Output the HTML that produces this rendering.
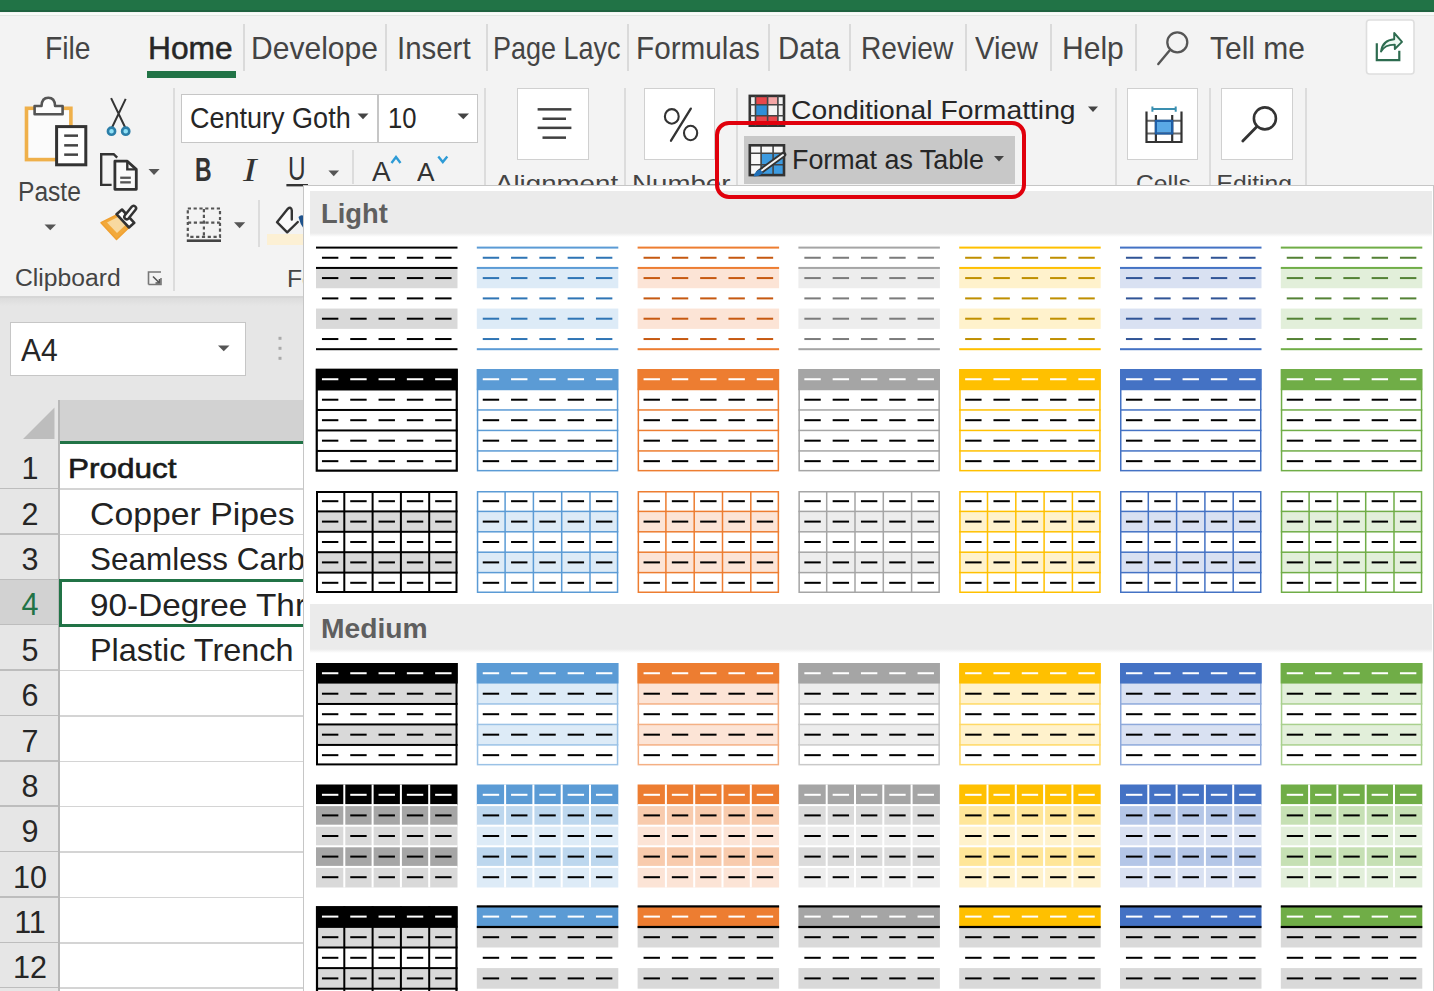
<!DOCTYPE html><html><head><meta charset="utf-8"><style>
html,body{margin:0;padding:0;}
body{width:1434px;height:991px;overflow:hidden;position:relative;background:#e6e6e6;font-family:"Liberation Sans",sans-serif;}
div{position:absolute;box-sizing:border-box;}
svg{position:absolute;}
</style></head><body>
<div style="left:0px;top:0px;width:1434px;height:12px;background:#217346;"></div>
<div style="left:0px;top:10px;width:1434px;height:2px;background:#1f6240;"></div>
<div style="left:0px;top:12px;width:1434px;height:284px;background:#f3f3f3;"></div>
<div style="left:0px;top:13px;width:1434px;height:2px;background:#f8fcf9;"></div>
<div style="left:0px;top:15px;width:1434px;height:1px;background:#e4e7e4;"></div>
<div style="left:45.00px;top:32.56px;font-size:30.52px;line-height:30.52px;color:#444444;white-space:pre;transform:scaleX(0.9273);transform-origin:0 0;">File</div>
<div style="left:148.00px;top:32.56px;font-size:30.52px;line-height:30.52px;color:#262626;white-space:pre;transform:scaleX(1.0401);transform-origin:0 0;-webkit-text-stroke:0.5px #262626;">Home</div>
<div style="left:147px;top:71px;width:89px;height:7px;background:#217346;"></div>
<div style="left:251.00px;top:32.56px;font-size:30.52px;line-height:30.52px;color:#444444;white-space:pre;transform:scaleX(0.9848);transform-origin:0 0;">Develope</div>
<div style="left:397.00px;top:32.56px;font-size:30.52px;line-height:30.52px;color:#444444;white-space:pre;transform:scaleX(0.9641);transform-origin:0 0;">Insert</div>
<div style="left:493.00px;top:32.56px;font-size:30.52px;line-height:30.52px;color:#444444;white-space:pre;transform:scaleX(0.8839);transform-origin:0 0;">Page Layc</div>
<div style="left:635.70px;top:32.56px;font-size:30.52px;line-height:30.52px;color:#444444;white-space:pre;transform:scaleX(0.9731);transform-origin:0 0;">Formulas</div>
<div style="left:777.60px;top:32.56px;font-size:30.52px;line-height:30.52px;color:#444444;white-space:pre;transform:scaleX(0.9629);transform-origin:0 0;">Data</div>
<div style="left:860.60px;top:32.56px;font-size:30.52px;line-height:30.52px;color:#444444;white-space:pre;transform:scaleX(0.9224);transform-origin:0 0;">Review</div>
<div style="left:975.00px;top:32.56px;font-size:30.52px;line-height:30.52px;color:#444444;white-space:pre;transform:scaleX(0.9591);transform-origin:0 0;">View</div>
<div style="left:1062.00px;top:32.56px;font-size:30.52px;line-height:30.52px;color:#444444;white-space:pre;transform:scaleX(0.9843);transform-origin:0 0;">Help</div>
<div style="left:1210.00px;top:32.56px;font-size:30.52px;line-height:30.52px;color:#444444;white-space:pre;transform:scaleX(0.9824);transform-origin:0 0;">Tell me</div>
<div style="left:243px;top:24px;width:2px;height:47px;background:#dadada;"></div>
<div style="left:385px;top:24px;width:2px;height:47px;background:#dadada;"></div>
<div style="left:486px;top:24px;width:2px;height:47px;background:#dadada;"></div>
<div style="left:627px;top:24px;width:2px;height:47px;background:#dadada;"></div>
<div style="left:768px;top:24px;width:2px;height:47px;background:#dadada;"></div>
<div style="left:849px;top:24px;width:2px;height:47px;background:#dadada;"></div>
<div style="left:965px;top:24px;width:2px;height:47px;background:#dadada;"></div>
<div style="left:1050px;top:24px;width:2px;height:47px;background:#dadada;"></div>
<div style="left:1135px;top:24px;width:2px;height:47px;background:#dadada;"></div>
<div style="left:173px;top:88px;width:2px;height:203px;background:#dcdcdc;"></div>
<div style="left:484px;top:88px;width:2px;height:203px;background:#dcdcdc;"></div>
<div style="left:624px;top:88px;width:2px;height:203px;background:#dcdcdc;"></div>
<div style="left:735.5px;top:88px;width:2px;height:203px;background:#dcdcdc;"></div>
<div style="left:1115px;top:88px;width:2px;height:203px;background:#dcdcdc;"></div>
<div style="left:1208.5px;top:88px;width:2px;height:203px;background:#dcdcdc;"></div>
<div style="left:1305px;top:88px;width:2px;height:203px;background:#dcdcdc;"></div>
<div style="left:18.40px;top:177.01px;font-size:28.34px;line-height:28.34px;color:#444;white-space:pre;transform:scaleX(0.8679);transform-origin:0 0;">Paste</div>
<div style="left:14.70px;top:265.93px;font-size:24.42px;line-height:24.42px;color:#444;white-space:pre;transform:scaleX(1.0114);transform-origin:0 0;">Clipboard</div>
<div style="left:287.00px;top:266.58px;font-size:24.71px;line-height:24.71px;color:#444;white-space:pre;">Fo</div>
<div style="left:181px;top:94px;width:297px;height:49px;background:#ffffff;border:1.5px solid #c6c6c6;"></div>
<div style="left:377px;top:95px;width:1.5px;height:47px;background:#c6c6c6;"></div>
<div style="left:190.00px;top:104.46px;font-size:28.63px;line-height:28.63px;color:#262626;white-space:pre;transform:scaleX(0.9437);transform-origin:0 0;">Century Goth</div>
<div style="left:387.50px;top:104.46px;font-size:28.63px;line-height:28.63px;color:#262626;white-space:pre;transform:scaleX(0.8951);transform-origin:0 0;">10</div>
<div style="left:194.60px;top:153.54px;font-size:32.56px;line-height:32.56px;color:#333;white-space:pre;font-weight:bold;transform:scaleX(0.7062);transform-origin:0 0;">B</div>
<div style="left:243px;top:152.5px;font-family:&quot;Liberation Serif&quot;,serif;font-style:italic;font-size:34px;line-height:34px;transform:scaleX(1.2);transform-origin:0 0;color:#333;">I</div>
<div style="left:288.40px;top:153.49px;font-size:32.85px;line-height:32.85px;color:#333;white-space:pre;transform:scaleX(0.7421);transform-origin:0 0;">U</div>
<div style="left:372.30px;top:157.11px;font-size:28.34px;line-height:28.34px;color:#333;white-space:pre;transform:scaleX(0.9839);transform-origin:0 0;">A</div>
<div style="left:417.30px;top:159.57px;font-size:25.44px;line-height:25.44px;color:#333;white-space:pre;transform:scaleX(1.0315);transform-origin:0 0;">A</div>
<div style="left:352px;top:150px;width:2px;height:34px;background:#dcdcdc;"></div>
<div style="left:258px;top:200px;width:2px;height:47px;background:#dcdcdc;"></div>
<div style="left:517px;top:88px;width:72px;height:72px;background:#ffffff;border:1.5px solid #d0d0d0;"></div>
<div style="left:644px;top:88px;width:71px;height:72px;background:#ffffff;border:1.5px solid #d0d0d0;"></div>
<div style="left:1127px;top:88px;width:71px;height:72px;background:#ffffff;border:1.5px solid #d0d0d0;"></div>
<div style="left:1221px;top:88px;width:72px;height:72px;background:#ffffff;border:1.5px solid #d0d0d0;"></div>
<div style="left:494.60px;top:171.58px;font-size:24.71px;line-height:24.71px;color:#444;white-space:pre;transform:scaleX(1.1203);transform-origin:0 0;">Alignment</div>
<div style="left:631.70px;top:171.58px;font-size:24.71px;line-height:24.71px;color:#444;white-space:pre;transform:scaleX(1.1203);transform-origin:0 0;">Number</div>
<div style="left:1136.00px;top:171.58px;font-size:24.71px;line-height:24.71px;color:#444;white-space:pre;">Cells</div>
<div style="left:1216.50px;top:171.58px;font-size:24.71px;line-height:24.71px;color:#444;white-space:pre;">Editing</div>
<div style="left:791.40px;top:97.97px;font-size:25.44px;line-height:25.44px;color:#262626;white-space:pre;transform:scaleX(1.1121);transform-origin:0 0;">Conditional Formatting</div>
<div style="left:744px;top:135.6px;width:271px;height:48.4px;background:#c8c8c8;"></div>
<div style="left:792.00px;top:145.92px;font-size:27.62px;line-height:27.62px;color:#262626;white-space:pre;transform:scaleX(0.9722);transform-origin:0 0;">Format as Table</div>
<div style="left:0px;top:296px;width:1434px;height:2px;background:#d6d6d6;"></div>
<div style="left:0px;top:298px;width:1434px;height:8px;background:linear-gradient(#dcdcdc,#e6e6e6);"></div>
<svg style="left:0;top:0" width="1434" height="991" viewBox="0 0 1434 991"><rect x="26.5" y="108.3" width="44.4" height="51.3" fill="#fbfbfb" stroke="#efb04a" stroke-width="3.6"/><path d="M34.6 114.2 V106 H41.5 Q41.8 97.8 48.3 97.8 Q54.8 97.8 55.1 106 H62.6 V114.2 Z" fill="#fdfdfd" stroke="#555" stroke-width="2.6" stroke-linejoin="round"/><rect x="56.6" y="126.6" width="29.2" height="38.2" fill="#fff" stroke="#333" stroke-width="3"/><rect x="64.2" y="134.4" width="13.8" height="2.5" fill="#444"/><rect x="64.2" y="144.10000000000002" width="13.8" height="2.5" fill="#444"/><rect x="64.2" y="153.4" width="13.8" height="2.5" fill="#444"/><path d="M44.5 224.5 H56 L50.25 230.3 Z" fill="#555"/><path d="M111.1 98.1 L125.2 127.5 M125.7 98.9 L112 127.5" stroke="#333" stroke-width="2" fill="none"/><circle cx="111.5" cy="131.2" r="3.6" fill="#8fe0f6" stroke="#2b7ea8" stroke-width="2.6"/><circle cx="125.7" cy="131.2" r="3.6" fill="#8fe0f6" stroke="#2b7ea8" stroke-width="2.6"/><path d="M111.6 184.9 H101.2 V154.2 H113.7 L117.2 157.6" fill="none" stroke="#333" stroke-width="2.4"/><path d="M114.9 161.2 H127.3 L136.3 169.4 V189.3 H114.9 Z" fill="#fafafa" stroke="#333" stroke-width="2.8" stroke-linejoin="round"/><path d="M127.3 161.2 V169.4 H136.3" fill="none" stroke="#333" stroke-width="2.4"/><rect x="120.2" y="176.6" width="10.6" height="2.3" fill="#555"/><rect x="120.2" y="181.2" width="10.6" height="2.3" fill="#555"/><path d="M148.5 169 H159.6 L154 175 Z" fill="#555"/><path d="M101 222.7 L117.5 214.5 L129.5 227 L116.5 239.5 Z" fill="#f2a93b" stroke="#f0a030" stroke-width="1.5" stroke-linejoin="round"/><path d="M107 222.5 L118 217 L125.5 225 L117 233 Z" fill="#f8d9a0"/><path d="M116.5 214.2 L122 209.5 L134.3 222.8 L129 227.5 Z" fill="#fff" stroke="#333" stroke-width="2.6" stroke-linejoin="round"/><path d="M126.8 216.8 L133.6 208.3" stroke="#333" stroke-width="7.4" stroke-linecap="round"/><path d="M126.8 216.8 L133.6 208.3" stroke="#fafafa" stroke-width="2.4" stroke-linecap="round"/><path d="M148.5 284.5 V272 H161 M148.5 284.5 H161 V278" fill="none" stroke="#777" stroke-width="1.6"/><path d="M153 276.5 L159.5 283 M159.5 279 V283 H155.5" fill="none" stroke="#555" stroke-width="1.6"/><path d="M357.5 113.5 H368.5 L363 119.3 Z" fill="#444"/><path d="M457.5 113.5 H469 L463.3 119.3 Z" fill="#444"/><path d="M328.4 170.4 H339.1 L333.75 176.2 Z" fill="#555"/><path d="M234 222.3 H245.2 L239.6 228.2 Z" fill="#555"/><path d="M391.5 163 L396 157 L400.5 163" fill="none" stroke="#2e9bd6" stroke-width="2.4"/><path d="M438.3 156.5 L442.8 162 L447.3 156.5" fill="none" stroke="#2e9bd6" stroke-width="2.4"/><rect x="286.4" y="184" width="21.6" height="2.4" fill="#333"/><rect x="187.8" y="208.5" width="32.2" height="28.3" fill="none" stroke="#555" stroke-width="2.2" stroke-dasharray="3.2 2.6"/><path d="M203.9 209 V236.5 M188 222.6 H219.8" fill="none" stroke="#555" stroke-width="2.2" stroke-dasharray="3.2 2.6"/><rect x="186.8" y="239.4" width="34.2" height="2.6" fill="#444"/><rect x="267" y="234" width="37" height="11" fill="#fcf0d4"/><path d="M291.8 219.5 V210.5 Q291.2 206 287.6 209 L277 222.2 L287.2 232.3 L297.8 222" fill="#fbfbfb" stroke="#333" stroke-width="2.4" stroke-linejoin="round" stroke-linecap="round"/><path d="M298.5 217 Q301 214 304 216 L304 229 Q300 224 298.5 217 Z" fill="#1f528c"/><ellipse cx="671.8" cy="116.4" rx="6.9" ry="7.3" fill="none" stroke="#333" stroke-width="2.1"/><ellipse cx="690.6" cy="133" rx="6.6" ry="7.3" fill="none" stroke="#333" stroke-width="2.1"/><path d="M690.8 108.6 L671 140.7" stroke="#333" stroke-width="2.3" stroke-linecap="round"/><rect x="537.6" y="108.1" width="33.799999999999955" height="2.5" fill="#404040"/><rect x="542.5" y="117.5" width="23.5" height="2.5" fill="#404040"/><rect x="537.6" y="126.6" width="33.799999999999955" height="2.5" fill="#404040"/><rect x="542.5" y="136.4" width="23.5" height="2.5" fill="#404040"/><rect x="756" y="96" width="11.5" height="9" fill="#e8474b"/><rect x="767.5" y="96" width="10.5" height="9" fill="#f4a6a6"/><rect x="756" y="105" width="11.5" height="11" fill="#2f8fd8"/><rect x="756" y="116" width="22" height="10" fill="#e8474b"/><rect x="749.8" y="95.9" width="34.2" height="29.8" fill="none" stroke="#333" stroke-width="2.6"/><path d="M755.5 96 V126 M767.6 96 V126 M777.9 96 V126 M749.8 104.8 H784 M749.8 115.8 H784" stroke="#444" stroke-width="1.6"/><path d="M1088 106.5 H1098 L1093 112 Z" fill="#444"/><rect x="750" y="145.3" width="34" height="29.8" fill="#f8f8f8"/><rect x="761" y="153.2" width="23" height="22" fill="#3d9be0"/><path d="M761.1 145.3 V175 M773.1 145.3 V175 M750 153.2 H784 M750 164.7 H784" stroke="#444" stroke-width="1.6"/><rect x="749.8" y="145.3" width="34.2" height="29.8" fill="none" stroke="#333" stroke-width="2.6"/><path d="M759 172.5 L783.5 154.5" stroke="#333" stroke-width="5.6" stroke-linecap="round"/><path d="M760 171.8 L783 155" stroke="#f4f4f4" stroke-width="2" stroke-linecap="round"/><path d="M753.5 176.5 Q755 170.5 760.5 169.5 L763 173 Q759 176.5 753.5 176.5 Z" fill="#1f6fb8"/><path d="M994 156 H1004 L999 161.5 Z" fill="#444"/><rect x="1156" y="120.7" width="16.4" height="12.8" fill="#5aa9e6"/><path d="M1146.5 120.8 H1181.5 M1146.5 133.5 H1181.5" fill="none" stroke="#6b6b6b" stroke-width="2"/><path d="M1146.5 111.5 V142 H1181.5 V111.5 M1155.9 115 V142 M1172.2 115 V142" fill="none" stroke="#333" stroke-width="2.2"/><path d="M1155.9 120 V134.5 M1172.2 120 V134.5 M1155.9 120.8 H1172.2 M1155.9 133.5 H1172.2" fill="none" stroke="#1f5fa8" stroke-width="2.2"/><path d="M1152.4 109.1 H1175.7 M1152.4 106.5 V111.7 M1175.7 106.5 V111.7" fill="none" stroke="#3a8fb0" stroke-width="2"/><circle cx="1264.9" cy="118.4" r="11" fill="none" stroke="#333" stroke-width="2.6"/><path d="M1257 126.6 L1242.8 141" stroke="#333" stroke-width="2.8" stroke-linecap="round"/><circle cx="1177.3" cy="42.3" r="10" fill="none" stroke="#555" stroke-width="2.3"/><path d="M1170 50 L1158.3 64" stroke="#555" stroke-width="2.4" stroke-linecap="round"/><rect x="1366.5" y="20" width="47.5" height="54" rx="3" fill="#ffffff" stroke="#dedede" stroke-width="1.6"/><path d="M1376.8 43.2 V60.2 H1399.3 V50.7" fill="none" stroke="#2d6b4f" stroke-width="2.2"/><path d="M1381 51.5 Q1382.5 40 1394.2 39.2 V33 L1402 41.8 L1394.8 49 V44.6 Q1385 44.5 1381 51.5 Z" fill="#eefaf3" stroke="#2d6b4f" stroke-width="1.9" stroke-linejoin="round"/></svg>
<div style="left:10px;top:322px;width:236px;height:54px;background:#ffffff;border:1.5px solid #c6c6c6;"></div>
<div style="left:20.50px;top:334.56px;font-size:30.52px;line-height:30.52px;color:#262626;white-space:pre;transform:scaleX(0.9858);transform-origin:0 0;">A4</div>
<div style="left:0px;top:400px;width:1434px;height:44px;background:#e6e6e6;"></div>
<div style="left:59px;top:400px;width:1400px;height:41px;background:#d2d2d2;"></div>
<div style="left:59px;top:441px;width:1400px;height:3px;background:#217346;"></div>
<div style="left:0px;top:444.0px;width:59px;height:45.37px;background:#e6e6e6;"></div>
<div style="left:0px;top:487.87px;width:59px;height:1.5px;background:#bdbdbd;"></div>
<div style="left:0px;top:489.37px;width:59px;height:45.37px;background:#e6e6e6;"></div>
<div style="left:0px;top:533.24px;width:59px;height:1.5px;background:#bdbdbd;"></div>
<div style="left:0px;top:534.74px;width:59px;height:45.37px;background:#e6e6e6;"></div>
<div style="left:0px;top:578.61px;width:59px;height:1.5px;background:#bdbdbd;"></div>
<div style="left:0px;top:580.11px;width:59px;height:45.37px;background:#d2d2d2;"></div>
<div style="left:0px;top:623.98px;width:59px;height:1.5px;background:#bdbdbd;"></div>
<div style="left:0px;top:625.48px;width:59px;height:45.37px;background:#e6e6e6;"></div>
<div style="left:0px;top:669.35px;width:59px;height:1.5px;background:#bdbdbd;"></div>
<div style="left:0px;top:670.85px;width:59px;height:45.37px;background:#e6e6e6;"></div>
<div style="left:0px;top:714.72px;width:59px;height:1.5px;background:#bdbdbd;"></div>
<div style="left:0px;top:716.22px;width:59px;height:45.37px;background:#e6e6e6;"></div>
<div style="left:0px;top:760.09px;width:59px;height:1.5px;background:#bdbdbd;"></div>
<div style="left:0px;top:761.5899999999999px;width:59px;height:45.37px;background:#e6e6e6;"></div>
<div style="left:0px;top:805.4599999999999px;width:59px;height:1.5px;background:#bdbdbd;"></div>
<div style="left:0px;top:806.96px;width:59px;height:45.37px;background:#e6e6e6;"></div>
<div style="left:0px;top:850.83px;width:59px;height:1.5px;background:#bdbdbd;"></div>
<div style="left:0px;top:852.3299999999999px;width:59px;height:45.37px;background:#e6e6e6;"></div>
<div style="left:0px;top:896.1999999999999px;width:59px;height:1.5px;background:#bdbdbd;"></div>
<div style="left:0px;top:897.7px;width:59px;height:45.37px;background:#e6e6e6;"></div>
<div style="left:0px;top:941.57px;width:59px;height:1.5px;background:#bdbdbd;"></div>
<div style="left:0px;top:943.0699999999999px;width:59px;height:45.37px;background:#e6e6e6;"></div>
<div style="left:0px;top:986.9399999999999px;width:59px;height:1.5px;background:#bdbdbd;"></div>
<div style="left:59px;top:444px;width:1400px;height:547px;background:#ffffff;"></div>
<div style="left:59px;top:488.37px;width:1400px;height:1.5px;background:#d4d4d4;"></div>
<div style="left:59px;top:533.74px;width:1400px;height:1.5px;background:#d4d4d4;"></div>
<div style="left:59px;top:579.11px;width:1400px;height:1.5px;background:#d4d4d4;"></div>
<div style="left:59px;top:624.48px;width:1400px;height:1.5px;background:#d4d4d4;"></div>
<div style="left:59px;top:669.85px;width:1400px;height:1.5px;background:#d4d4d4;"></div>
<div style="left:59px;top:715.22px;width:1400px;height:1.5px;background:#d4d4d4;"></div>
<div style="left:59px;top:760.5899999999999px;width:1400px;height:1.5px;background:#d4d4d4;"></div>
<div style="left:59px;top:805.96px;width:1400px;height:1.5px;background:#d4d4d4;"></div>
<div style="left:59px;top:851.3299999999999px;width:1400px;height:1.5px;background:#d4d4d4;"></div>
<div style="left:59px;top:896.7px;width:1400px;height:1.5px;background:#d4d4d4;"></div>
<div style="left:59px;top:942.0699999999999px;width:1400px;height:1.5px;background:#d4d4d4;"></div>
<div style="left:59px;top:987.4399999999999px;width:1400px;height:1.5px;background:#d4d4d4;"></div>
<div style="left:58px;top:400px;width:1.8px;height:591px;background:#b8b8b8;"></div>
<svg style="left:0;top:0" width="1434" height="991" viewBox="0 0 1434 991"><path d="M218 345.5 H229.5 L223.75 351.3 Z" fill="#555"/><rect x="278.5" y="336.8" width="3" height="3" fill="#aaa"/><rect x="278.5" y="346.8" width="3" height="3" fill="#aaa"/><rect x="278.5" y="356.8" width="3" height="3" fill="#aaa"/><path d="M54.5 407.5 V439 H23 Z" fill="#bdbdbd"/></svg>
<div style="left:67.80px;top:456.31px;font-size:27.03px;line-height:27.03px;color:#1a1a1a;white-space:pre;transform:scaleX(1.1646);transform-origin:0 0;-webkit-text-stroke:0.6px #1a1a1a;">Product</div>
<div style="left:89.60px;top:498.96px;font-size:30.52px;line-height:30.52px;color:#222;white-space:pre;transform:scaleX(1.1068);transform-origin:0 0;">Copper Pipes</div>
<div style="left:89.60px;top:544.33px;font-size:30.52px;line-height:30.52px;color:#222;white-space:pre;transform:scaleX(1.0304);transform-origin:0 0;">Seamless Carbon</div>
<div style="left:89.60px;top:589.70px;font-size:30.52px;line-height:30.52px;color:#222;white-space:pre;transform:scaleX(1.0914);transform-origin:0 0;">90-Degree Threaded</div>
<div style="left:89.60px;top:635.07px;font-size:30.52px;line-height:30.52px;color:#222;white-space:pre;transform:scaleX(1.0616);transform-origin:0 0;">Plastic Trench</div>
<div style="left:59px;top:579px;width:400px;height:48px;background:transparent;border:3px solid #217346;"></div>
<div style="left:21.51px;top:453.36px;font-size:30.52px;line-height:30.52px;color:#262626;white-space:pre;">1</div>
<div style="left:21.51px;top:498.73px;font-size:30.52px;line-height:30.52px;color:#262626;white-space:pre;">2</div>
<div style="left:21.51px;top:544.10px;font-size:30.52px;line-height:30.52px;color:#262626;white-space:pre;">3</div>
<div style="left:21.51px;top:589.47px;font-size:30.52px;line-height:30.52px;color:#217346;white-space:pre;">4</div>
<div style="left:21.51px;top:634.84px;font-size:30.52px;line-height:30.52px;color:#262626;white-space:pre;">5</div>
<div style="left:21.51px;top:680.21px;font-size:30.52px;line-height:30.52px;color:#262626;white-space:pre;">6</div>
<div style="left:21.51px;top:725.58px;font-size:30.52px;line-height:30.52px;color:#262626;white-space:pre;">7</div>
<div style="left:21.51px;top:770.95px;font-size:30.52px;line-height:30.52px;color:#262626;white-space:pre;">8</div>
<div style="left:21.51px;top:816.32px;font-size:30.52px;line-height:30.52px;color:#262626;white-space:pre;">9</div>
<div style="left:13.03px;top:861.69px;font-size:30.52px;line-height:30.52px;color:#262626;white-space:pre;">10</div>
<div style="left:14.16px;top:907.06px;font-size:30.52px;line-height:30.52px;color:#262626;white-space:pre;">11</div>
<div style="left:13.03px;top:952.43px;font-size:30.52px;line-height:30.52px;color:#262626;white-space:pre;">12</div>
<div style="left:303px;top:184.5px;width:1131px;height:807px;background:#ffffff;border:1.5px solid #c6c6c6;"></div>
<div style="left:310px;top:190.5px;width:1122px;height:42.5px;background:#ebebeb;"></div>
<div style="left:310px;top:233px;width:1122px;height:4px;background:linear-gradient(#ebebeb,#ffffff);"></div>
<div style="left:310px;top:604px;width:1122px;height:45px;background:#ebebeb;"></div>
<div style="left:310px;top:649px;width:1122px;height:4px;background:linear-gradient(#ebebeb,#ffffff);"></div>
<div style="left:320.70px;top:199.01px;font-size:28.34px;line-height:28.34px;color:#5f5f5f;white-space:pre;font-weight:bold;transform:scaleX(0.9647);transform-origin:0 0;">Light</div>
<div style="left:321.30px;top:615.22px;font-size:27.62px;line-height:27.62px;color:#5f5f5f;white-space:pre;font-weight:bold;transform:scaleX(1.0227);transform-origin:0 0;">Medium</div>
<svg style="left:0;top:0" width="1434" height="991" viewBox="0 0 1434 991"><rect x="316.00" y="267.92" width="141.50" height="20.32" fill="#d9d9d9"/><rect x="316.00" y="308.56" width="141.50" height="20.32" fill="#d9d9d9"/><rect x="316.00" y="246.60" width="141.50" height="2.00" fill="#000000"/><rect x="316.00" y="266.92" width="141.50" height="2.00" fill="#000000"/><rect x="316.00" y="348.20" width="141.50" height="2.00" fill="#000000"/><rect x="321.95" y="256.76" width="16.40" height="2.00" fill="#000"/><rect x="350.25" y="256.76" width="16.40" height="2.00" fill="#000"/><rect x="378.55" y="256.76" width="16.40" height="2.00" fill="#000"/><rect x="406.85" y="256.76" width="16.40" height="2.00" fill="#000"/><rect x="435.15" y="256.76" width="16.40" height="2.00" fill="#000"/><rect x="321.95" y="277.08" width="16.40" height="2.00" fill="#000"/><rect x="350.25" y="277.08" width="16.40" height="2.00" fill="#000"/><rect x="378.55" y="277.08" width="16.40" height="2.00" fill="#000"/><rect x="406.85" y="277.08" width="16.40" height="2.00" fill="#000"/><rect x="435.15" y="277.08" width="16.40" height="2.00" fill="#000"/><rect x="321.95" y="297.40" width="16.40" height="2.00" fill="#000"/><rect x="350.25" y="297.40" width="16.40" height="2.00" fill="#000"/><rect x="378.55" y="297.40" width="16.40" height="2.00" fill="#000"/><rect x="406.85" y="297.40" width="16.40" height="2.00" fill="#000"/><rect x="435.15" y="297.40" width="16.40" height="2.00" fill="#000"/><rect x="321.95" y="317.72" width="16.40" height="2.00" fill="#000"/><rect x="350.25" y="317.72" width="16.40" height="2.00" fill="#000"/><rect x="378.55" y="317.72" width="16.40" height="2.00" fill="#000"/><rect x="406.85" y="317.72" width="16.40" height="2.00" fill="#000"/><rect x="435.15" y="317.72" width="16.40" height="2.00" fill="#000"/><rect x="321.95" y="338.04" width="16.40" height="2.00" fill="#000"/><rect x="350.25" y="338.04" width="16.40" height="2.00" fill="#000"/><rect x="378.55" y="338.04" width="16.40" height="2.00" fill="#000"/><rect x="406.85" y="338.04" width="16.40" height="2.00" fill="#000"/><rect x="435.15" y="338.04" width="16.40" height="2.00" fill="#000"/><rect x="316.00" y="369.00" width="141.50" height="20.48" fill="#000000"/><rect x="316.00" y="388.48" width="141.50" height="2.00" fill="#000000"/><rect x="316.00" y="408.96" width="141.50" height="2.00" fill="#000000"/><rect x="316.00" y="429.44" width="141.50" height="2.00" fill="#000000"/><rect x="316.00" y="449.92" width="141.50" height="2.00" fill="#000000"/><rect x="316.75" y="369.75" width="140.00" height="100.90" fill="none" stroke="#000000" stroke-width="2.2"/><rect x="321.95" y="378.24" width="16.40" height="2.00" fill="#ffffff"/><rect x="350.25" y="378.24" width="16.40" height="2.00" fill="#ffffff"/><rect x="378.55" y="378.24" width="16.40" height="2.00" fill="#ffffff"/><rect x="406.85" y="378.24" width="16.40" height="2.00" fill="#ffffff"/><rect x="435.15" y="378.24" width="16.40" height="2.00" fill="#ffffff"/><rect x="321.95" y="398.72" width="16.40" height="2.00" fill="#000"/><rect x="350.25" y="398.72" width="16.40" height="2.00" fill="#000"/><rect x="378.55" y="398.72" width="16.40" height="2.00" fill="#000"/><rect x="406.85" y="398.72" width="16.40" height="2.00" fill="#000"/><rect x="435.15" y="398.72" width="16.40" height="2.00" fill="#000"/><rect x="321.95" y="419.20" width="16.40" height="2.00" fill="#000"/><rect x="350.25" y="419.20" width="16.40" height="2.00" fill="#000"/><rect x="378.55" y="419.20" width="16.40" height="2.00" fill="#000"/><rect x="406.85" y="419.20" width="16.40" height="2.00" fill="#000"/><rect x="435.15" y="419.20" width="16.40" height="2.00" fill="#000"/><rect x="321.95" y="439.68" width="16.40" height="2.00" fill="#000"/><rect x="350.25" y="439.68" width="16.40" height="2.00" fill="#000"/><rect x="378.55" y="439.68" width="16.40" height="2.00" fill="#000"/><rect x="406.85" y="439.68" width="16.40" height="2.00" fill="#000"/><rect x="435.15" y="439.68" width="16.40" height="2.00" fill="#000"/><rect x="321.95" y="460.16" width="16.40" height="2.00" fill="#000"/><rect x="350.25" y="460.16" width="16.40" height="2.00" fill="#000"/><rect x="378.55" y="460.16" width="16.40" height="2.00" fill="#000"/><rect x="406.85" y="460.16" width="16.40" height="2.00" fill="#000"/><rect x="435.15" y="460.16" width="16.40" height="2.00" fill="#000"/><rect x="316.00" y="511.40" width="141.50" height="20.40" fill="#d9d9d9"/><rect x="316.00" y="552.20" width="141.50" height="20.40" fill="#d9d9d9"/><rect x="316.00" y="510.40" width="141.50" height="2.00" fill="#000000"/><rect x="316.00" y="530.80" width="141.50" height="2.00" fill="#000000"/><rect x="316.00" y="551.20" width="141.50" height="2.00" fill="#000000"/><rect x="316.00" y="571.60" width="141.50" height="2.00" fill="#000000"/><rect x="343.30" y="491.00" width="2.00" height="102.00" fill="#000000"/><rect x="371.60" y="491.00" width="2.00" height="102.00" fill="#000000"/><rect x="399.90" y="491.00" width="2.00" height="102.00" fill="#000000"/><rect x="428.20" y="491.00" width="2.00" height="102.00" fill="#000000"/><rect x="317.00" y="492.00" width="139.50" height="100.00" fill="none" stroke="#000000" stroke-width="2"/><rect x="321.95" y="500.20" width="16.40" height="2.00" fill="#000"/><rect x="350.25" y="500.20" width="16.40" height="2.00" fill="#000"/><rect x="378.55" y="500.20" width="16.40" height="2.00" fill="#000"/><rect x="406.85" y="500.20" width="16.40" height="2.00" fill="#000"/><rect x="435.15" y="500.20" width="16.40" height="2.00" fill="#000"/><rect x="321.95" y="520.60" width="16.40" height="2.00" fill="#000"/><rect x="350.25" y="520.60" width="16.40" height="2.00" fill="#000"/><rect x="378.55" y="520.60" width="16.40" height="2.00" fill="#000"/><rect x="406.85" y="520.60" width="16.40" height="2.00" fill="#000"/><rect x="435.15" y="520.60" width="16.40" height="2.00" fill="#000"/><rect x="321.95" y="541.00" width="16.40" height="2.00" fill="#000"/><rect x="350.25" y="541.00" width="16.40" height="2.00" fill="#000"/><rect x="378.55" y="541.00" width="16.40" height="2.00" fill="#000"/><rect x="406.85" y="541.00" width="16.40" height="2.00" fill="#000"/><rect x="435.15" y="541.00" width="16.40" height="2.00" fill="#000"/><rect x="321.95" y="561.40" width="16.40" height="2.00" fill="#000"/><rect x="350.25" y="561.40" width="16.40" height="2.00" fill="#000"/><rect x="378.55" y="561.40" width="16.40" height="2.00" fill="#000"/><rect x="406.85" y="561.40" width="16.40" height="2.00" fill="#000"/><rect x="435.15" y="561.40" width="16.40" height="2.00" fill="#000"/><rect x="321.95" y="581.80" width="16.40" height="2.00" fill="#000"/><rect x="350.25" y="581.80" width="16.40" height="2.00" fill="#000"/><rect x="378.55" y="581.80" width="16.40" height="2.00" fill="#000"/><rect x="406.85" y="581.80" width="16.40" height="2.00" fill="#000"/><rect x="435.15" y="581.80" width="16.40" height="2.00" fill="#000"/><rect x="316.00" y="663.00" width="141.50" height="20.48" fill="#000000"/><rect x="316.00" y="683.48" width="141.50" height="20.48" fill="#d9d9d9"/><rect x="316.00" y="724.44" width="141.50" height="20.48" fill="#d9d9d9"/><rect x="316.00" y="702.96" width="141.50" height="2.00" fill="#000"/><rect x="316.00" y="723.44" width="141.50" height="2.00" fill="#000"/><rect x="316.00" y="743.92" width="141.50" height="2.00" fill="#000"/><rect x="317.00" y="664.00" width="139.50" height="100.40" fill="none" stroke="#000" stroke-width="2"/><rect x="316.00" y="663.00" width="141.50" height="20.48" fill="#000000"/><rect x="321.95" y="672.24" width="16.40" height="2.00" fill="#ffffff"/><rect x="350.25" y="672.24" width="16.40" height="2.00" fill="#ffffff"/><rect x="378.55" y="672.24" width="16.40" height="2.00" fill="#ffffff"/><rect x="406.85" y="672.24" width="16.40" height="2.00" fill="#ffffff"/><rect x="435.15" y="672.24" width="16.40" height="2.00" fill="#ffffff"/><rect x="321.95" y="692.72" width="16.40" height="2.00" fill="#000"/><rect x="350.25" y="692.72" width="16.40" height="2.00" fill="#000"/><rect x="378.55" y="692.72" width="16.40" height="2.00" fill="#000"/><rect x="406.85" y="692.72" width="16.40" height="2.00" fill="#000"/><rect x="435.15" y="692.72" width="16.40" height="2.00" fill="#000"/><rect x="321.95" y="713.20" width="16.40" height="2.00" fill="#000"/><rect x="350.25" y="713.20" width="16.40" height="2.00" fill="#000"/><rect x="378.55" y="713.20" width="16.40" height="2.00" fill="#000"/><rect x="406.85" y="713.20" width="16.40" height="2.00" fill="#000"/><rect x="435.15" y="713.20" width="16.40" height="2.00" fill="#000"/><rect x="321.95" y="733.68" width="16.40" height="2.00" fill="#000"/><rect x="350.25" y="733.68" width="16.40" height="2.00" fill="#000"/><rect x="378.55" y="733.68" width="16.40" height="2.00" fill="#000"/><rect x="406.85" y="733.68" width="16.40" height="2.00" fill="#000"/><rect x="435.15" y="733.68" width="16.40" height="2.00" fill="#000"/><rect x="321.95" y="754.16" width="16.40" height="2.00" fill="#000"/><rect x="350.25" y="754.16" width="16.40" height="2.00" fill="#000"/><rect x="378.55" y="754.16" width="16.40" height="2.00" fill="#000"/><rect x="406.85" y="754.16" width="16.40" height="2.00" fill="#000"/><rect x="435.15" y="754.16" width="16.40" height="2.00" fill="#000"/><rect x="316.00" y="784.50" width="141.50" height="20.60" fill="#000000"/><rect x="316.00" y="805.10" width="141.50" height="20.60" fill="#a6a6a6"/><rect x="316.00" y="825.70" width="141.50" height="20.60" fill="#d9d9d9"/><rect x="316.00" y="846.30" width="141.50" height="20.60" fill="#a6a6a6"/><rect x="316.00" y="866.90" width="141.50" height="20.60" fill="#d9d9d9"/><rect x="316.00" y="804.10" width="141.50" height="2.00" fill="#ffffff"/><rect x="316.00" y="824.70" width="141.50" height="2.00" fill="#ffffff"/><rect x="316.00" y="845.30" width="141.50" height="2.00" fill="#ffffff"/><rect x="316.00" y="865.90" width="141.50" height="2.00" fill="#ffffff"/><rect x="343.30" y="784.50" width="2.00" height="103.00" fill="#ffffff"/><rect x="371.60" y="784.50" width="2.00" height="103.00" fill="#ffffff"/><rect x="399.90" y="784.50" width="2.00" height="103.00" fill="#ffffff"/><rect x="428.20" y="784.50" width="2.00" height="103.00" fill="#ffffff"/><rect x="321.95" y="793.80" width="16.40" height="2.00" fill="#ffffff"/><rect x="350.25" y="793.80" width="16.40" height="2.00" fill="#ffffff"/><rect x="378.55" y="793.80" width="16.40" height="2.00" fill="#ffffff"/><rect x="406.85" y="793.80" width="16.40" height="2.00" fill="#ffffff"/><rect x="435.15" y="793.80" width="16.40" height="2.00" fill="#ffffff"/><rect x="321.95" y="814.40" width="16.40" height="2.00" fill="#000"/><rect x="350.25" y="814.40" width="16.40" height="2.00" fill="#000"/><rect x="378.55" y="814.40" width="16.40" height="2.00" fill="#000"/><rect x="406.85" y="814.40" width="16.40" height="2.00" fill="#000"/><rect x="435.15" y="814.40" width="16.40" height="2.00" fill="#000"/><rect x="321.95" y="835.00" width="16.40" height="2.00" fill="#000"/><rect x="350.25" y="835.00" width="16.40" height="2.00" fill="#000"/><rect x="378.55" y="835.00" width="16.40" height="2.00" fill="#000"/><rect x="406.85" y="835.00" width="16.40" height="2.00" fill="#000"/><rect x="435.15" y="835.00" width="16.40" height="2.00" fill="#000"/><rect x="321.95" y="855.60" width="16.40" height="2.00" fill="#000"/><rect x="350.25" y="855.60" width="16.40" height="2.00" fill="#000"/><rect x="378.55" y="855.60" width="16.40" height="2.00" fill="#000"/><rect x="406.85" y="855.60" width="16.40" height="2.00" fill="#000"/><rect x="435.15" y="855.60" width="16.40" height="2.00" fill="#000"/><rect x="321.95" y="876.20" width="16.40" height="2.00" fill="#000"/><rect x="350.25" y="876.20" width="16.40" height="2.00" fill="#000"/><rect x="378.55" y="876.20" width="16.40" height="2.00" fill="#000"/><rect x="406.85" y="876.20" width="16.40" height="2.00" fill="#000"/><rect x="435.15" y="876.20" width="16.40" height="2.00" fill="#000"/><rect x="316.00" y="906.30" width="141.50" height="21.60" fill="#000000"/><rect x="316.00" y="926.90" width="141.50" height="20.60" fill="#d9d9d9"/><rect x="316.00" y="968.10" width="141.50" height="20.60" fill="#d9d9d9"/><rect x="316.00" y="925.90" width="141.50" height="2.00" fill="#000"/><rect x="316.00" y="946.50" width="141.50" height="2.00" fill="#000"/><rect x="316.00" y="967.10" width="141.50" height="2.00" fill="#000"/><rect x="316.00" y="987.70" width="141.50" height="2.00" fill="#000"/><rect x="343.30" y="906.30" width="2.00" height="103.00" fill="#000"/><rect x="371.60" y="906.30" width="2.00" height="103.00" fill="#000"/><rect x="399.90" y="906.30" width="2.00" height="103.00" fill="#000"/><rect x="428.20" y="906.30" width="2.00" height="103.00" fill="#000"/><rect x="317.00" y="907.30" width="139.50" height="101.00" fill="none" stroke="#000" stroke-width="2.2"/><rect x="321.95" y="915.60" width="16.40" height="2.00" fill="#ffffff"/><rect x="350.25" y="915.60" width="16.40" height="2.00" fill="#ffffff"/><rect x="378.55" y="915.60" width="16.40" height="2.00" fill="#ffffff"/><rect x="406.85" y="915.60" width="16.40" height="2.00" fill="#ffffff"/><rect x="435.15" y="915.60" width="16.40" height="2.00" fill="#ffffff"/><rect x="321.95" y="936.20" width="16.40" height="2.00" fill="#000"/><rect x="350.25" y="936.20" width="16.40" height="2.00" fill="#000"/><rect x="378.55" y="936.20" width="16.40" height="2.00" fill="#000"/><rect x="406.85" y="936.20" width="16.40" height="2.00" fill="#000"/><rect x="435.15" y="936.20" width="16.40" height="2.00" fill="#000"/><rect x="321.95" y="956.80" width="16.40" height="2.00" fill="#000"/><rect x="350.25" y="956.80" width="16.40" height="2.00" fill="#000"/><rect x="378.55" y="956.80" width="16.40" height="2.00" fill="#000"/><rect x="406.85" y="956.80" width="16.40" height="2.00" fill="#000"/><rect x="435.15" y="956.80" width="16.40" height="2.00" fill="#000"/><rect x="321.95" y="977.40" width="16.40" height="2.00" fill="#000"/><rect x="350.25" y="977.40" width="16.40" height="2.00" fill="#000"/><rect x="378.55" y="977.40" width="16.40" height="2.00" fill="#000"/><rect x="406.85" y="977.40" width="16.40" height="2.00" fill="#000"/><rect x="435.15" y="977.40" width="16.40" height="2.00" fill="#000"/><rect x="321.95" y="998.00" width="16.40" height="2.00" fill="#000"/><rect x="350.25" y="998.00" width="16.40" height="2.00" fill="#000"/><rect x="378.55" y="998.00" width="16.40" height="2.00" fill="#000"/><rect x="406.85" y="998.00" width="16.40" height="2.00" fill="#000"/><rect x="435.15" y="998.00" width="16.40" height="2.00" fill="#000"/><rect x="476.80" y="267.92" width="141.50" height="20.32" fill="#ddebf7"/><rect x="476.80" y="308.56" width="141.50" height="20.32" fill="#ddebf7"/><rect x="476.80" y="246.60" width="141.50" height="2.00" fill="#5b9bd5"/><rect x="476.80" y="266.92" width="141.50" height="2.00" fill="#5b9bd5"/><rect x="476.80" y="348.20" width="141.50" height="2.00" fill="#5b9bd5"/><rect x="482.75" y="256.76" width="16.40" height="2.00" fill="#2f75b5"/><rect x="511.05" y="256.76" width="16.40" height="2.00" fill="#2f75b5"/><rect x="539.35" y="256.76" width="16.40" height="2.00" fill="#2f75b5"/><rect x="567.65" y="256.76" width="16.40" height="2.00" fill="#2f75b5"/><rect x="595.95" y="256.76" width="16.40" height="2.00" fill="#2f75b5"/><rect x="482.75" y="277.08" width="16.40" height="2.00" fill="#2f75b5"/><rect x="511.05" y="277.08" width="16.40" height="2.00" fill="#2f75b5"/><rect x="539.35" y="277.08" width="16.40" height="2.00" fill="#2f75b5"/><rect x="567.65" y="277.08" width="16.40" height="2.00" fill="#2f75b5"/><rect x="595.95" y="277.08" width="16.40" height="2.00" fill="#2f75b5"/><rect x="482.75" y="297.40" width="16.40" height="2.00" fill="#2f75b5"/><rect x="511.05" y="297.40" width="16.40" height="2.00" fill="#2f75b5"/><rect x="539.35" y="297.40" width="16.40" height="2.00" fill="#2f75b5"/><rect x="567.65" y="297.40" width="16.40" height="2.00" fill="#2f75b5"/><rect x="595.95" y="297.40" width="16.40" height="2.00" fill="#2f75b5"/><rect x="482.75" y="317.72" width="16.40" height="2.00" fill="#2f75b5"/><rect x="511.05" y="317.72" width="16.40" height="2.00" fill="#2f75b5"/><rect x="539.35" y="317.72" width="16.40" height="2.00" fill="#2f75b5"/><rect x="567.65" y="317.72" width="16.40" height="2.00" fill="#2f75b5"/><rect x="595.95" y="317.72" width="16.40" height="2.00" fill="#2f75b5"/><rect x="482.75" y="338.04" width="16.40" height="2.00" fill="#2f75b5"/><rect x="511.05" y="338.04" width="16.40" height="2.00" fill="#2f75b5"/><rect x="539.35" y="338.04" width="16.40" height="2.00" fill="#2f75b5"/><rect x="567.65" y="338.04" width="16.40" height="2.00" fill="#2f75b5"/><rect x="595.95" y="338.04" width="16.40" height="2.00" fill="#2f75b5"/><rect x="476.80" y="369.00" width="141.50" height="20.48" fill="#5b9bd5"/><rect x="476.80" y="388.73" width="141.50" height="1.50" fill="#5b9bd5"/><rect x="476.80" y="409.21" width="141.50" height="1.50" fill="#5b9bd5"/><rect x="476.80" y="429.69" width="141.50" height="1.50" fill="#5b9bd5"/><rect x="476.80" y="450.17" width="141.50" height="1.50" fill="#5b9bd5"/><rect x="477.55" y="369.75" width="140.00" height="100.90" fill="none" stroke="#5b9bd5" stroke-width="1.5"/><rect x="482.75" y="378.24" width="16.40" height="2.00" fill="#ffffff"/><rect x="511.05" y="378.24" width="16.40" height="2.00" fill="#ffffff"/><rect x="539.35" y="378.24" width="16.40" height="2.00" fill="#ffffff"/><rect x="567.65" y="378.24" width="16.40" height="2.00" fill="#ffffff"/><rect x="595.95" y="378.24" width="16.40" height="2.00" fill="#ffffff"/><rect x="482.75" y="398.72" width="16.40" height="2.00" fill="#000"/><rect x="511.05" y="398.72" width="16.40" height="2.00" fill="#000"/><rect x="539.35" y="398.72" width="16.40" height="2.00" fill="#000"/><rect x="567.65" y="398.72" width="16.40" height="2.00" fill="#000"/><rect x="595.95" y="398.72" width="16.40" height="2.00" fill="#000"/><rect x="482.75" y="419.20" width="16.40" height="2.00" fill="#000"/><rect x="511.05" y="419.20" width="16.40" height="2.00" fill="#000"/><rect x="539.35" y="419.20" width="16.40" height="2.00" fill="#000"/><rect x="567.65" y="419.20" width="16.40" height="2.00" fill="#000"/><rect x="595.95" y="419.20" width="16.40" height="2.00" fill="#000"/><rect x="482.75" y="439.68" width="16.40" height="2.00" fill="#000"/><rect x="511.05" y="439.68" width="16.40" height="2.00" fill="#000"/><rect x="539.35" y="439.68" width="16.40" height="2.00" fill="#000"/><rect x="567.65" y="439.68" width="16.40" height="2.00" fill="#000"/><rect x="595.95" y="439.68" width="16.40" height="2.00" fill="#000"/><rect x="482.75" y="460.16" width="16.40" height="2.00" fill="#000"/><rect x="511.05" y="460.16" width="16.40" height="2.00" fill="#000"/><rect x="539.35" y="460.16" width="16.40" height="2.00" fill="#000"/><rect x="567.65" y="460.16" width="16.40" height="2.00" fill="#000"/><rect x="595.95" y="460.16" width="16.40" height="2.00" fill="#000"/><rect x="476.80" y="511.40" width="141.50" height="20.40" fill="#ddebf7"/><rect x="476.80" y="552.20" width="141.50" height="20.40" fill="#ddebf7"/><rect x="476.80" y="510.65" width="141.50" height="1.50" fill="#5b9bd5"/><rect x="476.80" y="531.05" width="141.50" height="1.50" fill="#5b9bd5"/><rect x="476.80" y="551.45" width="141.50" height="1.50" fill="#5b9bd5"/><rect x="476.80" y="571.85" width="141.50" height="1.50" fill="#5b9bd5"/><rect x="504.35" y="491.00" width="1.50" height="102.00" fill="#5b9bd5"/><rect x="532.65" y="491.00" width="1.50" height="102.00" fill="#5b9bd5"/><rect x="560.95" y="491.00" width="1.50" height="102.00" fill="#5b9bd5"/><rect x="589.25" y="491.00" width="1.50" height="102.00" fill="#5b9bd5"/><rect x="477.55" y="491.75" width="140.00" height="100.50" fill="none" stroke="#5b9bd5" stroke-width="1.5"/><rect x="482.75" y="500.20" width="16.40" height="2.00" fill="#000"/><rect x="511.05" y="500.20" width="16.40" height="2.00" fill="#000"/><rect x="539.35" y="500.20" width="16.40" height="2.00" fill="#000"/><rect x="567.65" y="500.20" width="16.40" height="2.00" fill="#000"/><rect x="595.95" y="500.20" width="16.40" height="2.00" fill="#000"/><rect x="482.75" y="520.60" width="16.40" height="2.00" fill="#000"/><rect x="511.05" y="520.60" width="16.40" height="2.00" fill="#000"/><rect x="539.35" y="520.60" width="16.40" height="2.00" fill="#000"/><rect x="567.65" y="520.60" width="16.40" height="2.00" fill="#000"/><rect x="595.95" y="520.60" width="16.40" height="2.00" fill="#000"/><rect x="482.75" y="541.00" width="16.40" height="2.00" fill="#000"/><rect x="511.05" y="541.00" width="16.40" height="2.00" fill="#000"/><rect x="539.35" y="541.00" width="16.40" height="2.00" fill="#000"/><rect x="567.65" y="541.00" width="16.40" height="2.00" fill="#000"/><rect x="595.95" y="541.00" width="16.40" height="2.00" fill="#000"/><rect x="482.75" y="561.40" width="16.40" height="2.00" fill="#000"/><rect x="511.05" y="561.40" width="16.40" height="2.00" fill="#000"/><rect x="539.35" y="561.40" width="16.40" height="2.00" fill="#000"/><rect x="567.65" y="561.40" width="16.40" height="2.00" fill="#000"/><rect x="595.95" y="561.40" width="16.40" height="2.00" fill="#000"/><rect x="482.75" y="581.80" width="16.40" height="2.00" fill="#000"/><rect x="511.05" y="581.80" width="16.40" height="2.00" fill="#000"/><rect x="539.35" y="581.80" width="16.40" height="2.00" fill="#000"/><rect x="567.65" y="581.80" width="16.40" height="2.00" fill="#000"/><rect x="595.95" y="581.80" width="16.40" height="2.00" fill="#000"/><rect x="476.80" y="663.00" width="141.50" height="20.48" fill="#5b9bd5"/><rect x="476.80" y="683.48" width="141.50" height="20.48" fill="#ddebf7"/><rect x="476.80" y="724.44" width="141.50" height="20.48" fill="#ddebf7"/><rect x="476.80" y="703.21" width="141.50" height="1.50" fill="#9bc2e6"/><rect x="476.80" y="723.69" width="141.50" height="1.50" fill="#9bc2e6"/><rect x="476.80" y="744.17" width="141.50" height="1.50" fill="#9bc2e6"/><rect x="477.55" y="663.75" width="140.00" height="100.90" fill="none" stroke="#9bc2e6" stroke-width="1.5"/><rect x="476.80" y="663.00" width="141.50" height="20.48" fill="#5b9bd5"/><rect x="482.75" y="672.24" width="16.40" height="2.00" fill="#ffffff"/><rect x="511.05" y="672.24" width="16.40" height="2.00" fill="#ffffff"/><rect x="539.35" y="672.24" width="16.40" height="2.00" fill="#ffffff"/><rect x="567.65" y="672.24" width="16.40" height="2.00" fill="#ffffff"/><rect x="595.95" y="672.24" width="16.40" height="2.00" fill="#ffffff"/><rect x="482.75" y="692.72" width="16.40" height="2.00" fill="#000"/><rect x="511.05" y="692.72" width="16.40" height="2.00" fill="#000"/><rect x="539.35" y="692.72" width="16.40" height="2.00" fill="#000"/><rect x="567.65" y="692.72" width="16.40" height="2.00" fill="#000"/><rect x="595.95" y="692.72" width="16.40" height="2.00" fill="#000"/><rect x="482.75" y="713.20" width="16.40" height="2.00" fill="#000"/><rect x="511.05" y="713.20" width="16.40" height="2.00" fill="#000"/><rect x="539.35" y="713.20" width="16.40" height="2.00" fill="#000"/><rect x="567.65" y="713.20" width="16.40" height="2.00" fill="#000"/><rect x="595.95" y="713.20" width="16.40" height="2.00" fill="#000"/><rect x="482.75" y="733.68" width="16.40" height="2.00" fill="#000"/><rect x="511.05" y="733.68" width="16.40" height="2.00" fill="#000"/><rect x="539.35" y="733.68" width="16.40" height="2.00" fill="#000"/><rect x="567.65" y="733.68" width="16.40" height="2.00" fill="#000"/><rect x="595.95" y="733.68" width="16.40" height="2.00" fill="#000"/><rect x="482.75" y="754.16" width="16.40" height="2.00" fill="#000"/><rect x="511.05" y="754.16" width="16.40" height="2.00" fill="#000"/><rect x="539.35" y="754.16" width="16.40" height="2.00" fill="#000"/><rect x="567.65" y="754.16" width="16.40" height="2.00" fill="#000"/><rect x="595.95" y="754.16" width="16.40" height="2.00" fill="#000"/><rect x="476.80" y="784.50" width="141.50" height="20.60" fill="#5b9bd5"/><rect x="476.80" y="805.10" width="141.50" height="20.60" fill="#bdd7ee"/><rect x="476.80" y="825.70" width="141.50" height="20.60" fill="#ddebf7"/><rect x="476.80" y="846.30" width="141.50" height="20.60" fill="#bdd7ee"/><rect x="476.80" y="866.90" width="141.50" height="20.60" fill="#ddebf7"/><rect x="476.80" y="804.10" width="141.50" height="2.00" fill="#ffffff"/><rect x="476.80" y="824.70" width="141.50" height="2.00" fill="#ffffff"/><rect x="476.80" y="845.30" width="141.50" height="2.00" fill="#ffffff"/><rect x="476.80" y="865.90" width="141.50" height="2.00" fill="#ffffff"/><rect x="504.10" y="784.50" width="2.00" height="103.00" fill="#ffffff"/><rect x="532.40" y="784.50" width="2.00" height="103.00" fill="#ffffff"/><rect x="560.70" y="784.50" width="2.00" height="103.00" fill="#ffffff"/><rect x="589.00" y="784.50" width="2.00" height="103.00" fill="#ffffff"/><rect x="482.75" y="793.80" width="16.40" height="2.00" fill="#ffffff"/><rect x="511.05" y="793.80" width="16.40" height="2.00" fill="#ffffff"/><rect x="539.35" y="793.80" width="16.40" height="2.00" fill="#ffffff"/><rect x="567.65" y="793.80" width="16.40" height="2.00" fill="#ffffff"/><rect x="595.95" y="793.80" width="16.40" height="2.00" fill="#ffffff"/><rect x="482.75" y="814.40" width="16.40" height="2.00" fill="#000"/><rect x="511.05" y="814.40" width="16.40" height="2.00" fill="#000"/><rect x="539.35" y="814.40" width="16.40" height="2.00" fill="#000"/><rect x="567.65" y="814.40" width="16.40" height="2.00" fill="#000"/><rect x="595.95" y="814.40" width="16.40" height="2.00" fill="#000"/><rect x="482.75" y="835.00" width="16.40" height="2.00" fill="#000"/><rect x="511.05" y="835.00" width="16.40" height="2.00" fill="#000"/><rect x="539.35" y="835.00" width="16.40" height="2.00" fill="#000"/><rect x="567.65" y="835.00" width="16.40" height="2.00" fill="#000"/><rect x="595.95" y="835.00" width="16.40" height="2.00" fill="#000"/><rect x="482.75" y="855.60" width="16.40" height="2.00" fill="#000"/><rect x="511.05" y="855.60" width="16.40" height="2.00" fill="#000"/><rect x="539.35" y="855.60" width="16.40" height="2.00" fill="#000"/><rect x="567.65" y="855.60" width="16.40" height="2.00" fill="#000"/><rect x="595.95" y="855.60" width="16.40" height="2.00" fill="#000"/><rect x="482.75" y="876.20" width="16.40" height="2.00" fill="#000"/><rect x="511.05" y="876.20" width="16.40" height="2.00" fill="#000"/><rect x="539.35" y="876.20" width="16.40" height="2.00" fill="#000"/><rect x="567.65" y="876.20" width="16.40" height="2.00" fill="#000"/><rect x="595.95" y="876.20" width="16.40" height="2.00" fill="#000"/><rect x="476.80" y="906.30" width="141.50" height="21.60" fill="#5b9bd5"/><rect x="476.80" y="926.90" width="141.50" height="20.60" fill="#d9d9d9"/><rect x="476.80" y="968.10" width="141.50" height="20.60" fill="#d9d9d9"/><rect x="476.80" y="905.30" width="141.50" height="2.20" fill="#000"/><rect x="476.80" y="925.90" width="141.50" height="2.20" fill="#000"/><rect x="482.75" y="915.60" width="16.40" height="2.00" fill="#ffffff"/><rect x="511.05" y="915.60" width="16.40" height="2.00" fill="#ffffff"/><rect x="539.35" y="915.60" width="16.40" height="2.00" fill="#ffffff"/><rect x="567.65" y="915.60" width="16.40" height="2.00" fill="#ffffff"/><rect x="595.95" y="915.60" width="16.40" height="2.00" fill="#ffffff"/><rect x="482.75" y="936.20" width="16.40" height="2.00" fill="#000"/><rect x="511.05" y="936.20" width="16.40" height="2.00" fill="#000"/><rect x="539.35" y="936.20" width="16.40" height="2.00" fill="#000"/><rect x="567.65" y="936.20" width="16.40" height="2.00" fill="#000"/><rect x="595.95" y="936.20" width="16.40" height="2.00" fill="#000"/><rect x="482.75" y="956.80" width="16.40" height="2.00" fill="#000"/><rect x="511.05" y="956.80" width="16.40" height="2.00" fill="#000"/><rect x="539.35" y="956.80" width="16.40" height="2.00" fill="#000"/><rect x="567.65" y="956.80" width="16.40" height="2.00" fill="#000"/><rect x="595.95" y="956.80" width="16.40" height="2.00" fill="#000"/><rect x="482.75" y="977.40" width="16.40" height="2.00" fill="#000"/><rect x="511.05" y="977.40" width="16.40" height="2.00" fill="#000"/><rect x="539.35" y="977.40" width="16.40" height="2.00" fill="#000"/><rect x="567.65" y="977.40" width="16.40" height="2.00" fill="#000"/><rect x="595.95" y="977.40" width="16.40" height="2.00" fill="#000"/><rect x="482.75" y="998.00" width="16.40" height="2.00" fill="#000"/><rect x="511.05" y="998.00" width="16.40" height="2.00" fill="#000"/><rect x="539.35" y="998.00" width="16.40" height="2.00" fill="#000"/><rect x="567.65" y="998.00" width="16.40" height="2.00" fill="#000"/><rect x="595.95" y="998.00" width="16.40" height="2.00" fill="#000"/><rect x="637.60" y="267.92" width="141.50" height="20.32" fill="#fce4d6"/><rect x="637.60" y="308.56" width="141.50" height="20.32" fill="#fce4d6"/><rect x="637.60" y="246.60" width="141.50" height="2.00" fill="#ed7d31"/><rect x="637.60" y="266.92" width="141.50" height="2.00" fill="#ed7d31"/><rect x="637.60" y="348.20" width="141.50" height="2.00" fill="#ed7d31"/><rect x="643.55" y="256.76" width="16.40" height="2.00" fill="#c65911"/><rect x="671.85" y="256.76" width="16.40" height="2.00" fill="#c65911"/><rect x="700.15" y="256.76" width="16.40" height="2.00" fill="#c65911"/><rect x="728.45" y="256.76" width="16.40" height="2.00" fill="#c65911"/><rect x="756.75" y="256.76" width="16.40" height="2.00" fill="#c65911"/><rect x="643.55" y="277.08" width="16.40" height="2.00" fill="#c65911"/><rect x="671.85" y="277.08" width="16.40" height="2.00" fill="#c65911"/><rect x="700.15" y="277.08" width="16.40" height="2.00" fill="#c65911"/><rect x="728.45" y="277.08" width="16.40" height="2.00" fill="#c65911"/><rect x="756.75" y="277.08" width="16.40" height="2.00" fill="#c65911"/><rect x="643.55" y="297.40" width="16.40" height="2.00" fill="#c65911"/><rect x="671.85" y="297.40" width="16.40" height="2.00" fill="#c65911"/><rect x="700.15" y="297.40" width="16.40" height="2.00" fill="#c65911"/><rect x="728.45" y="297.40" width="16.40" height="2.00" fill="#c65911"/><rect x="756.75" y="297.40" width="16.40" height="2.00" fill="#c65911"/><rect x="643.55" y="317.72" width="16.40" height="2.00" fill="#c65911"/><rect x="671.85" y="317.72" width="16.40" height="2.00" fill="#c65911"/><rect x="700.15" y="317.72" width="16.40" height="2.00" fill="#c65911"/><rect x="728.45" y="317.72" width="16.40" height="2.00" fill="#c65911"/><rect x="756.75" y="317.72" width="16.40" height="2.00" fill="#c65911"/><rect x="643.55" y="338.04" width="16.40" height="2.00" fill="#c65911"/><rect x="671.85" y="338.04" width="16.40" height="2.00" fill="#c65911"/><rect x="700.15" y="338.04" width="16.40" height="2.00" fill="#c65911"/><rect x="728.45" y="338.04" width="16.40" height="2.00" fill="#c65911"/><rect x="756.75" y="338.04" width="16.40" height="2.00" fill="#c65911"/><rect x="637.60" y="369.00" width="141.50" height="20.48" fill="#ed7d31"/><rect x="637.60" y="388.73" width="141.50" height="1.50" fill="#ed7d31"/><rect x="637.60" y="409.21" width="141.50" height="1.50" fill="#ed7d31"/><rect x="637.60" y="429.69" width="141.50" height="1.50" fill="#ed7d31"/><rect x="637.60" y="450.17" width="141.50" height="1.50" fill="#ed7d31"/><rect x="638.35" y="369.75" width="140.00" height="100.90" fill="none" stroke="#ed7d31" stroke-width="1.5"/><rect x="643.55" y="378.24" width="16.40" height="2.00" fill="#ffffff"/><rect x="671.85" y="378.24" width="16.40" height="2.00" fill="#ffffff"/><rect x="700.15" y="378.24" width="16.40" height="2.00" fill="#ffffff"/><rect x="728.45" y="378.24" width="16.40" height="2.00" fill="#ffffff"/><rect x="756.75" y="378.24" width="16.40" height="2.00" fill="#ffffff"/><rect x="643.55" y="398.72" width="16.40" height="2.00" fill="#000"/><rect x="671.85" y="398.72" width="16.40" height="2.00" fill="#000"/><rect x="700.15" y="398.72" width="16.40" height="2.00" fill="#000"/><rect x="728.45" y="398.72" width="16.40" height="2.00" fill="#000"/><rect x="756.75" y="398.72" width="16.40" height="2.00" fill="#000"/><rect x="643.55" y="419.20" width="16.40" height="2.00" fill="#000"/><rect x="671.85" y="419.20" width="16.40" height="2.00" fill="#000"/><rect x="700.15" y="419.20" width="16.40" height="2.00" fill="#000"/><rect x="728.45" y="419.20" width="16.40" height="2.00" fill="#000"/><rect x="756.75" y="419.20" width="16.40" height="2.00" fill="#000"/><rect x="643.55" y="439.68" width="16.40" height="2.00" fill="#000"/><rect x="671.85" y="439.68" width="16.40" height="2.00" fill="#000"/><rect x="700.15" y="439.68" width="16.40" height="2.00" fill="#000"/><rect x="728.45" y="439.68" width="16.40" height="2.00" fill="#000"/><rect x="756.75" y="439.68" width="16.40" height="2.00" fill="#000"/><rect x="643.55" y="460.16" width="16.40" height="2.00" fill="#000"/><rect x="671.85" y="460.16" width="16.40" height="2.00" fill="#000"/><rect x="700.15" y="460.16" width="16.40" height="2.00" fill="#000"/><rect x="728.45" y="460.16" width="16.40" height="2.00" fill="#000"/><rect x="756.75" y="460.16" width="16.40" height="2.00" fill="#000"/><rect x="637.60" y="511.40" width="141.50" height="20.40" fill="#fce4d6"/><rect x="637.60" y="552.20" width="141.50" height="20.40" fill="#fce4d6"/><rect x="637.60" y="510.65" width="141.50" height="1.50" fill="#ed7d31"/><rect x="637.60" y="531.05" width="141.50" height="1.50" fill="#ed7d31"/><rect x="637.60" y="551.45" width="141.50" height="1.50" fill="#ed7d31"/><rect x="637.60" y="571.85" width="141.50" height="1.50" fill="#ed7d31"/><rect x="665.15" y="491.00" width="1.50" height="102.00" fill="#ed7d31"/><rect x="693.45" y="491.00" width="1.50" height="102.00" fill="#ed7d31"/><rect x="721.75" y="491.00" width="1.50" height="102.00" fill="#ed7d31"/><rect x="750.05" y="491.00" width="1.50" height="102.00" fill="#ed7d31"/><rect x="638.35" y="491.75" width="140.00" height="100.50" fill="none" stroke="#ed7d31" stroke-width="1.5"/><rect x="643.55" y="500.20" width="16.40" height="2.00" fill="#000"/><rect x="671.85" y="500.20" width="16.40" height="2.00" fill="#000"/><rect x="700.15" y="500.20" width="16.40" height="2.00" fill="#000"/><rect x="728.45" y="500.20" width="16.40" height="2.00" fill="#000"/><rect x="756.75" y="500.20" width="16.40" height="2.00" fill="#000"/><rect x="643.55" y="520.60" width="16.40" height="2.00" fill="#000"/><rect x="671.85" y="520.60" width="16.40" height="2.00" fill="#000"/><rect x="700.15" y="520.60" width="16.40" height="2.00" fill="#000"/><rect x="728.45" y="520.60" width="16.40" height="2.00" fill="#000"/><rect x="756.75" y="520.60" width="16.40" height="2.00" fill="#000"/><rect x="643.55" y="541.00" width="16.40" height="2.00" fill="#000"/><rect x="671.85" y="541.00" width="16.40" height="2.00" fill="#000"/><rect x="700.15" y="541.00" width="16.40" height="2.00" fill="#000"/><rect x="728.45" y="541.00" width="16.40" height="2.00" fill="#000"/><rect x="756.75" y="541.00" width="16.40" height="2.00" fill="#000"/><rect x="643.55" y="561.40" width="16.40" height="2.00" fill="#000"/><rect x="671.85" y="561.40" width="16.40" height="2.00" fill="#000"/><rect x="700.15" y="561.40" width="16.40" height="2.00" fill="#000"/><rect x="728.45" y="561.40" width="16.40" height="2.00" fill="#000"/><rect x="756.75" y="561.40" width="16.40" height="2.00" fill="#000"/><rect x="643.55" y="581.80" width="16.40" height="2.00" fill="#000"/><rect x="671.85" y="581.80" width="16.40" height="2.00" fill="#000"/><rect x="700.15" y="581.80" width="16.40" height="2.00" fill="#000"/><rect x="728.45" y="581.80" width="16.40" height="2.00" fill="#000"/><rect x="756.75" y="581.80" width="16.40" height="2.00" fill="#000"/><rect x="637.60" y="663.00" width="141.50" height="20.48" fill="#ed7d31"/><rect x="637.60" y="683.48" width="141.50" height="20.48" fill="#fce4d6"/><rect x="637.60" y="724.44" width="141.50" height="20.48" fill="#fce4d6"/><rect x="637.60" y="703.21" width="141.50" height="1.50" fill="#f4b084"/><rect x="637.60" y="723.69" width="141.50" height="1.50" fill="#f4b084"/><rect x="637.60" y="744.17" width="141.50" height="1.50" fill="#f4b084"/><rect x="638.35" y="663.75" width="140.00" height="100.90" fill="none" stroke="#f4b084" stroke-width="1.5"/><rect x="637.60" y="663.00" width="141.50" height="20.48" fill="#ed7d31"/><rect x="643.55" y="672.24" width="16.40" height="2.00" fill="#ffffff"/><rect x="671.85" y="672.24" width="16.40" height="2.00" fill="#ffffff"/><rect x="700.15" y="672.24" width="16.40" height="2.00" fill="#ffffff"/><rect x="728.45" y="672.24" width="16.40" height="2.00" fill="#ffffff"/><rect x="756.75" y="672.24" width="16.40" height="2.00" fill="#ffffff"/><rect x="643.55" y="692.72" width="16.40" height="2.00" fill="#000"/><rect x="671.85" y="692.72" width="16.40" height="2.00" fill="#000"/><rect x="700.15" y="692.72" width="16.40" height="2.00" fill="#000"/><rect x="728.45" y="692.72" width="16.40" height="2.00" fill="#000"/><rect x="756.75" y="692.72" width="16.40" height="2.00" fill="#000"/><rect x="643.55" y="713.20" width="16.40" height="2.00" fill="#000"/><rect x="671.85" y="713.20" width="16.40" height="2.00" fill="#000"/><rect x="700.15" y="713.20" width="16.40" height="2.00" fill="#000"/><rect x="728.45" y="713.20" width="16.40" height="2.00" fill="#000"/><rect x="756.75" y="713.20" width="16.40" height="2.00" fill="#000"/><rect x="643.55" y="733.68" width="16.40" height="2.00" fill="#000"/><rect x="671.85" y="733.68" width="16.40" height="2.00" fill="#000"/><rect x="700.15" y="733.68" width="16.40" height="2.00" fill="#000"/><rect x="728.45" y="733.68" width="16.40" height="2.00" fill="#000"/><rect x="756.75" y="733.68" width="16.40" height="2.00" fill="#000"/><rect x="643.55" y="754.16" width="16.40" height="2.00" fill="#000"/><rect x="671.85" y="754.16" width="16.40" height="2.00" fill="#000"/><rect x="700.15" y="754.16" width="16.40" height="2.00" fill="#000"/><rect x="728.45" y="754.16" width="16.40" height="2.00" fill="#000"/><rect x="756.75" y="754.16" width="16.40" height="2.00" fill="#000"/><rect x="637.60" y="784.50" width="141.50" height="20.60" fill="#ed7d31"/><rect x="637.60" y="805.10" width="141.50" height="20.60" fill="#f8cbad"/><rect x="637.60" y="825.70" width="141.50" height="20.60" fill="#fce4d6"/><rect x="637.60" y="846.30" width="141.50" height="20.60" fill="#f8cbad"/><rect x="637.60" y="866.90" width="141.50" height="20.60" fill="#fce4d6"/><rect x="637.60" y="804.10" width="141.50" height="2.00" fill="#ffffff"/><rect x="637.60" y="824.70" width="141.50" height="2.00" fill="#ffffff"/><rect x="637.60" y="845.30" width="141.50" height="2.00" fill="#ffffff"/><rect x="637.60" y="865.90" width="141.50" height="2.00" fill="#ffffff"/><rect x="664.90" y="784.50" width="2.00" height="103.00" fill="#ffffff"/><rect x="693.20" y="784.50" width="2.00" height="103.00" fill="#ffffff"/><rect x="721.50" y="784.50" width="2.00" height="103.00" fill="#ffffff"/><rect x="749.80" y="784.50" width="2.00" height="103.00" fill="#ffffff"/><rect x="643.55" y="793.80" width="16.40" height="2.00" fill="#ffffff"/><rect x="671.85" y="793.80" width="16.40" height="2.00" fill="#ffffff"/><rect x="700.15" y="793.80" width="16.40" height="2.00" fill="#ffffff"/><rect x="728.45" y="793.80" width="16.40" height="2.00" fill="#ffffff"/><rect x="756.75" y="793.80" width="16.40" height="2.00" fill="#ffffff"/><rect x="643.55" y="814.40" width="16.40" height="2.00" fill="#000"/><rect x="671.85" y="814.40" width="16.40" height="2.00" fill="#000"/><rect x="700.15" y="814.40" width="16.40" height="2.00" fill="#000"/><rect x="728.45" y="814.40" width="16.40" height="2.00" fill="#000"/><rect x="756.75" y="814.40" width="16.40" height="2.00" fill="#000"/><rect x="643.55" y="835.00" width="16.40" height="2.00" fill="#000"/><rect x="671.85" y="835.00" width="16.40" height="2.00" fill="#000"/><rect x="700.15" y="835.00" width="16.40" height="2.00" fill="#000"/><rect x="728.45" y="835.00" width="16.40" height="2.00" fill="#000"/><rect x="756.75" y="835.00" width="16.40" height="2.00" fill="#000"/><rect x="643.55" y="855.60" width="16.40" height="2.00" fill="#000"/><rect x="671.85" y="855.60" width="16.40" height="2.00" fill="#000"/><rect x="700.15" y="855.60" width="16.40" height="2.00" fill="#000"/><rect x="728.45" y="855.60" width="16.40" height="2.00" fill="#000"/><rect x="756.75" y="855.60" width="16.40" height="2.00" fill="#000"/><rect x="643.55" y="876.20" width="16.40" height="2.00" fill="#000"/><rect x="671.85" y="876.20" width="16.40" height="2.00" fill="#000"/><rect x="700.15" y="876.20" width="16.40" height="2.00" fill="#000"/><rect x="728.45" y="876.20" width="16.40" height="2.00" fill="#000"/><rect x="756.75" y="876.20" width="16.40" height="2.00" fill="#000"/><rect x="637.60" y="906.30" width="141.50" height="21.60" fill="#ed7d31"/><rect x="637.60" y="926.90" width="141.50" height="20.60" fill="#d9d9d9"/><rect x="637.60" y="968.10" width="141.50" height="20.60" fill="#d9d9d9"/><rect x="637.60" y="905.30" width="141.50" height="2.20" fill="#000"/><rect x="637.60" y="925.90" width="141.50" height="2.20" fill="#000"/><rect x="643.55" y="915.60" width="16.40" height="2.00" fill="#ffffff"/><rect x="671.85" y="915.60" width="16.40" height="2.00" fill="#ffffff"/><rect x="700.15" y="915.60" width="16.40" height="2.00" fill="#ffffff"/><rect x="728.45" y="915.60" width="16.40" height="2.00" fill="#ffffff"/><rect x="756.75" y="915.60" width="16.40" height="2.00" fill="#ffffff"/><rect x="643.55" y="936.20" width="16.40" height="2.00" fill="#000"/><rect x="671.85" y="936.20" width="16.40" height="2.00" fill="#000"/><rect x="700.15" y="936.20" width="16.40" height="2.00" fill="#000"/><rect x="728.45" y="936.20" width="16.40" height="2.00" fill="#000"/><rect x="756.75" y="936.20" width="16.40" height="2.00" fill="#000"/><rect x="643.55" y="956.80" width="16.40" height="2.00" fill="#000"/><rect x="671.85" y="956.80" width="16.40" height="2.00" fill="#000"/><rect x="700.15" y="956.80" width="16.40" height="2.00" fill="#000"/><rect x="728.45" y="956.80" width="16.40" height="2.00" fill="#000"/><rect x="756.75" y="956.80" width="16.40" height="2.00" fill="#000"/><rect x="643.55" y="977.40" width="16.40" height="2.00" fill="#000"/><rect x="671.85" y="977.40" width="16.40" height="2.00" fill="#000"/><rect x="700.15" y="977.40" width="16.40" height="2.00" fill="#000"/><rect x="728.45" y="977.40" width="16.40" height="2.00" fill="#000"/><rect x="756.75" y="977.40" width="16.40" height="2.00" fill="#000"/><rect x="643.55" y="998.00" width="16.40" height="2.00" fill="#000"/><rect x="671.85" y="998.00" width="16.40" height="2.00" fill="#000"/><rect x="700.15" y="998.00" width="16.40" height="2.00" fill="#000"/><rect x="728.45" y="998.00" width="16.40" height="2.00" fill="#000"/><rect x="756.75" y="998.00" width="16.40" height="2.00" fill="#000"/><rect x="798.40" y="267.92" width="141.50" height="20.32" fill="#ededed"/><rect x="798.40" y="308.56" width="141.50" height="20.32" fill="#ededed"/><rect x="798.40" y="246.60" width="141.50" height="2.00" fill="#a5a5a5"/><rect x="798.40" y="266.92" width="141.50" height="2.00" fill="#a5a5a5"/><rect x="798.40" y="348.20" width="141.50" height="2.00" fill="#a5a5a5"/><rect x="804.35" y="256.76" width="16.40" height="2.00" fill="#7b7b7b"/><rect x="832.65" y="256.76" width="16.40" height="2.00" fill="#7b7b7b"/><rect x="860.95" y="256.76" width="16.40" height="2.00" fill="#7b7b7b"/><rect x="889.25" y="256.76" width="16.40" height="2.00" fill="#7b7b7b"/><rect x="917.55" y="256.76" width="16.40" height="2.00" fill="#7b7b7b"/><rect x="804.35" y="277.08" width="16.40" height="2.00" fill="#7b7b7b"/><rect x="832.65" y="277.08" width="16.40" height="2.00" fill="#7b7b7b"/><rect x="860.95" y="277.08" width="16.40" height="2.00" fill="#7b7b7b"/><rect x="889.25" y="277.08" width="16.40" height="2.00" fill="#7b7b7b"/><rect x="917.55" y="277.08" width="16.40" height="2.00" fill="#7b7b7b"/><rect x="804.35" y="297.40" width="16.40" height="2.00" fill="#7b7b7b"/><rect x="832.65" y="297.40" width="16.40" height="2.00" fill="#7b7b7b"/><rect x="860.95" y="297.40" width="16.40" height="2.00" fill="#7b7b7b"/><rect x="889.25" y="297.40" width="16.40" height="2.00" fill="#7b7b7b"/><rect x="917.55" y="297.40" width="16.40" height="2.00" fill="#7b7b7b"/><rect x="804.35" y="317.72" width="16.40" height="2.00" fill="#7b7b7b"/><rect x="832.65" y="317.72" width="16.40" height="2.00" fill="#7b7b7b"/><rect x="860.95" y="317.72" width="16.40" height="2.00" fill="#7b7b7b"/><rect x="889.25" y="317.72" width="16.40" height="2.00" fill="#7b7b7b"/><rect x="917.55" y="317.72" width="16.40" height="2.00" fill="#7b7b7b"/><rect x="804.35" y="338.04" width="16.40" height="2.00" fill="#7b7b7b"/><rect x="832.65" y="338.04" width="16.40" height="2.00" fill="#7b7b7b"/><rect x="860.95" y="338.04" width="16.40" height="2.00" fill="#7b7b7b"/><rect x="889.25" y="338.04" width="16.40" height="2.00" fill="#7b7b7b"/><rect x="917.55" y="338.04" width="16.40" height="2.00" fill="#7b7b7b"/><rect x="798.40" y="369.00" width="141.50" height="20.48" fill="#a5a5a5"/><rect x="798.40" y="388.73" width="141.50" height="1.50" fill="#a5a5a5"/><rect x="798.40" y="409.21" width="141.50" height="1.50" fill="#a5a5a5"/><rect x="798.40" y="429.69" width="141.50" height="1.50" fill="#a5a5a5"/><rect x="798.40" y="450.17" width="141.50" height="1.50" fill="#a5a5a5"/><rect x="799.15" y="369.75" width="140.00" height="100.90" fill="none" stroke="#a5a5a5" stroke-width="1.5"/><rect x="804.35" y="378.24" width="16.40" height="2.00" fill="#ffffff"/><rect x="832.65" y="378.24" width="16.40" height="2.00" fill="#ffffff"/><rect x="860.95" y="378.24" width="16.40" height="2.00" fill="#ffffff"/><rect x="889.25" y="378.24" width="16.40" height="2.00" fill="#ffffff"/><rect x="917.55" y="378.24" width="16.40" height="2.00" fill="#ffffff"/><rect x="804.35" y="398.72" width="16.40" height="2.00" fill="#000"/><rect x="832.65" y="398.72" width="16.40" height="2.00" fill="#000"/><rect x="860.95" y="398.72" width="16.40" height="2.00" fill="#000"/><rect x="889.25" y="398.72" width="16.40" height="2.00" fill="#000"/><rect x="917.55" y="398.72" width="16.40" height="2.00" fill="#000"/><rect x="804.35" y="419.20" width="16.40" height="2.00" fill="#000"/><rect x="832.65" y="419.20" width="16.40" height="2.00" fill="#000"/><rect x="860.95" y="419.20" width="16.40" height="2.00" fill="#000"/><rect x="889.25" y="419.20" width="16.40" height="2.00" fill="#000"/><rect x="917.55" y="419.20" width="16.40" height="2.00" fill="#000"/><rect x="804.35" y="439.68" width="16.40" height="2.00" fill="#000"/><rect x="832.65" y="439.68" width="16.40" height="2.00" fill="#000"/><rect x="860.95" y="439.68" width="16.40" height="2.00" fill="#000"/><rect x="889.25" y="439.68" width="16.40" height="2.00" fill="#000"/><rect x="917.55" y="439.68" width="16.40" height="2.00" fill="#000"/><rect x="804.35" y="460.16" width="16.40" height="2.00" fill="#000"/><rect x="832.65" y="460.16" width="16.40" height="2.00" fill="#000"/><rect x="860.95" y="460.16" width="16.40" height="2.00" fill="#000"/><rect x="889.25" y="460.16" width="16.40" height="2.00" fill="#000"/><rect x="917.55" y="460.16" width="16.40" height="2.00" fill="#000"/><rect x="798.40" y="511.40" width="141.50" height="20.40" fill="#ededed"/><rect x="798.40" y="552.20" width="141.50" height="20.40" fill="#ededed"/><rect x="798.40" y="510.65" width="141.50" height="1.50" fill="#a5a5a5"/><rect x="798.40" y="531.05" width="141.50" height="1.50" fill="#a5a5a5"/><rect x="798.40" y="551.45" width="141.50" height="1.50" fill="#a5a5a5"/><rect x="798.40" y="571.85" width="141.50" height="1.50" fill="#a5a5a5"/><rect x="825.95" y="491.00" width="1.50" height="102.00" fill="#a5a5a5"/><rect x="854.25" y="491.00" width="1.50" height="102.00" fill="#a5a5a5"/><rect x="882.55" y="491.00" width="1.50" height="102.00" fill="#a5a5a5"/><rect x="910.85" y="491.00" width="1.50" height="102.00" fill="#a5a5a5"/><rect x="799.15" y="491.75" width="140.00" height="100.50" fill="none" stroke="#a5a5a5" stroke-width="1.5"/><rect x="804.35" y="500.20" width="16.40" height="2.00" fill="#000"/><rect x="832.65" y="500.20" width="16.40" height="2.00" fill="#000"/><rect x="860.95" y="500.20" width="16.40" height="2.00" fill="#000"/><rect x="889.25" y="500.20" width="16.40" height="2.00" fill="#000"/><rect x="917.55" y="500.20" width="16.40" height="2.00" fill="#000"/><rect x="804.35" y="520.60" width="16.40" height="2.00" fill="#000"/><rect x="832.65" y="520.60" width="16.40" height="2.00" fill="#000"/><rect x="860.95" y="520.60" width="16.40" height="2.00" fill="#000"/><rect x="889.25" y="520.60" width="16.40" height="2.00" fill="#000"/><rect x="917.55" y="520.60" width="16.40" height="2.00" fill="#000"/><rect x="804.35" y="541.00" width="16.40" height="2.00" fill="#000"/><rect x="832.65" y="541.00" width="16.40" height="2.00" fill="#000"/><rect x="860.95" y="541.00" width="16.40" height="2.00" fill="#000"/><rect x="889.25" y="541.00" width="16.40" height="2.00" fill="#000"/><rect x="917.55" y="541.00" width="16.40" height="2.00" fill="#000"/><rect x="804.35" y="561.40" width="16.40" height="2.00" fill="#000"/><rect x="832.65" y="561.40" width="16.40" height="2.00" fill="#000"/><rect x="860.95" y="561.40" width="16.40" height="2.00" fill="#000"/><rect x="889.25" y="561.40" width="16.40" height="2.00" fill="#000"/><rect x="917.55" y="561.40" width="16.40" height="2.00" fill="#000"/><rect x="804.35" y="581.80" width="16.40" height="2.00" fill="#000"/><rect x="832.65" y="581.80" width="16.40" height="2.00" fill="#000"/><rect x="860.95" y="581.80" width="16.40" height="2.00" fill="#000"/><rect x="889.25" y="581.80" width="16.40" height="2.00" fill="#000"/><rect x="917.55" y="581.80" width="16.40" height="2.00" fill="#000"/><rect x="798.40" y="663.00" width="141.50" height="20.48" fill="#a5a5a5"/><rect x="798.40" y="683.48" width="141.50" height="20.48" fill="#ededed"/><rect x="798.40" y="724.44" width="141.50" height="20.48" fill="#ededed"/><rect x="798.40" y="703.21" width="141.50" height="1.50" fill="#c9c9c9"/><rect x="798.40" y="723.69" width="141.50" height="1.50" fill="#c9c9c9"/><rect x="798.40" y="744.17" width="141.50" height="1.50" fill="#c9c9c9"/><rect x="799.15" y="663.75" width="140.00" height="100.90" fill="none" stroke="#c9c9c9" stroke-width="1.5"/><rect x="798.40" y="663.00" width="141.50" height="20.48" fill="#a5a5a5"/><rect x="804.35" y="672.24" width="16.40" height="2.00" fill="#ffffff"/><rect x="832.65" y="672.24" width="16.40" height="2.00" fill="#ffffff"/><rect x="860.95" y="672.24" width="16.40" height="2.00" fill="#ffffff"/><rect x="889.25" y="672.24" width="16.40" height="2.00" fill="#ffffff"/><rect x="917.55" y="672.24" width="16.40" height="2.00" fill="#ffffff"/><rect x="804.35" y="692.72" width="16.40" height="2.00" fill="#000"/><rect x="832.65" y="692.72" width="16.40" height="2.00" fill="#000"/><rect x="860.95" y="692.72" width="16.40" height="2.00" fill="#000"/><rect x="889.25" y="692.72" width="16.40" height="2.00" fill="#000"/><rect x="917.55" y="692.72" width="16.40" height="2.00" fill="#000"/><rect x="804.35" y="713.20" width="16.40" height="2.00" fill="#000"/><rect x="832.65" y="713.20" width="16.40" height="2.00" fill="#000"/><rect x="860.95" y="713.20" width="16.40" height="2.00" fill="#000"/><rect x="889.25" y="713.20" width="16.40" height="2.00" fill="#000"/><rect x="917.55" y="713.20" width="16.40" height="2.00" fill="#000"/><rect x="804.35" y="733.68" width="16.40" height="2.00" fill="#000"/><rect x="832.65" y="733.68" width="16.40" height="2.00" fill="#000"/><rect x="860.95" y="733.68" width="16.40" height="2.00" fill="#000"/><rect x="889.25" y="733.68" width="16.40" height="2.00" fill="#000"/><rect x="917.55" y="733.68" width="16.40" height="2.00" fill="#000"/><rect x="804.35" y="754.16" width="16.40" height="2.00" fill="#000"/><rect x="832.65" y="754.16" width="16.40" height="2.00" fill="#000"/><rect x="860.95" y="754.16" width="16.40" height="2.00" fill="#000"/><rect x="889.25" y="754.16" width="16.40" height="2.00" fill="#000"/><rect x="917.55" y="754.16" width="16.40" height="2.00" fill="#000"/><rect x="798.40" y="784.50" width="141.50" height="20.60" fill="#a5a5a5"/><rect x="798.40" y="805.10" width="141.50" height="20.60" fill="#dbdbdb"/><rect x="798.40" y="825.70" width="141.50" height="20.60" fill="#ededed"/><rect x="798.40" y="846.30" width="141.50" height="20.60" fill="#dbdbdb"/><rect x="798.40" y="866.90" width="141.50" height="20.60" fill="#ededed"/><rect x="798.40" y="804.10" width="141.50" height="2.00" fill="#ffffff"/><rect x="798.40" y="824.70" width="141.50" height="2.00" fill="#ffffff"/><rect x="798.40" y="845.30" width="141.50" height="2.00" fill="#ffffff"/><rect x="798.40" y="865.90" width="141.50" height="2.00" fill="#ffffff"/><rect x="825.70" y="784.50" width="2.00" height="103.00" fill="#ffffff"/><rect x="854.00" y="784.50" width="2.00" height="103.00" fill="#ffffff"/><rect x="882.30" y="784.50" width="2.00" height="103.00" fill="#ffffff"/><rect x="910.60" y="784.50" width="2.00" height="103.00" fill="#ffffff"/><rect x="804.35" y="793.80" width="16.40" height="2.00" fill="#ffffff"/><rect x="832.65" y="793.80" width="16.40" height="2.00" fill="#ffffff"/><rect x="860.95" y="793.80" width="16.40" height="2.00" fill="#ffffff"/><rect x="889.25" y="793.80" width="16.40" height="2.00" fill="#ffffff"/><rect x="917.55" y="793.80" width="16.40" height="2.00" fill="#ffffff"/><rect x="804.35" y="814.40" width="16.40" height="2.00" fill="#000"/><rect x="832.65" y="814.40" width="16.40" height="2.00" fill="#000"/><rect x="860.95" y="814.40" width="16.40" height="2.00" fill="#000"/><rect x="889.25" y="814.40" width="16.40" height="2.00" fill="#000"/><rect x="917.55" y="814.40" width="16.40" height="2.00" fill="#000"/><rect x="804.35" y="835.00" width="16.40" height="2.00" fill="#000"/><rect x="832.65" y="835.00" width="16.40" height="2.00" fill="#000"/><rect x="860.95" y="835.00" width="16.40" height="2.00" fill="#000"/><rect x="889.25" y="835.00" width="16.40" height="2.00" fill="#000"/><rect x="917.55" y="835.00" width="16.40" height="2.00" fill="#000"/><rect x="804.35" y="855.60" width="16.40" height="2.00" fill="#000"/><rect x="832.65" y="855.60" width="16.40" height="2.00" fill="#000"/><rect x="860.95" y="855.60" width="16.40" height="2.00" fill="#000"/><rect x="889.25" y="855.60" width="16.40" height="2.00" fill="#000"/><rect x="917.55" y="855.60" width="16.40" height="2.00" fill="#000"/><rect x="804.35" y="876.20" width="16.40" height="2.00" fill="#000"/><rect x="832.65" y="876.20" width="16.40" height="2.00" fill="#000"/><rect x="860.95" y="876.20" width="16.40" height="2.00" fill="#000"/><rect x="889.25" y="876.20" width="16.40" height="2.00" fill="#000"/><rect x="917.55" y="876.20" width="16.40" height="2.00" fill="#000"/><rect x="798.40" y="906.30" width="141.50" height="21.60" fill="#a5a5a5"/><rect x="798.40" y="926.90" width="141.50" height="20.60" fill="#d9d9d9"/><rect x="798.40" y="968.10" width="141.50" height="20.60" fill="#d9d9d9"/><rect x="798.40" y="905.30" width="141.50" height="2.20" fill="#000"/><rect x="798.40" y="925.90" width="141.50" height="2.20" fill="#000"/><rect x="804.35" y="915.60" width="16.40" height="2.00" fill="#ffffff"/><rect x="832.65" y="915.60" width="16.40" height="2.00" fill="#ffffff"/><rect x="860.95" y="915.60" width="16.40" height="2.00" fill="#ffffff"/><rect x="889.25" y="915.60" width="16.40" height="2.00" fill="#ffffff"/><rect x="917.55" y="915.60" width="16.40" height="2.00" fill="#ffffff"/><rect x="804.35" y="936.20" width="16.40" height="2.00" fill="#000"/><rect x="832.65" y="936.20" width="16.40" height="2.00" fill="#000"/><rect x="860.95" y="936.20" width="16.40" height="2.00" fill="#000"/><rect x="889.25" y="936.20" width="16.40" height="2.00" fill="#000"/><rect x="917.55" y="936.20" width="16.40" height="2.00" fill="#000"/><rect x="804.35" y="956.80" width="16.40" height="2.00" fill="#000"/><rect x="832.65" y="956.80" width="16.40" height="2.00" fill="#000"/><rect x="860.95" y="956.80" width="16.40" height="2.00" fill="#000"/><rect x="889.25" y="956.80" width="16.40" height="2.00" fill="#000"/><rect x="917.55" y="956.80" width="16.40" height="2.00" fill="#000"/><rect x="804.35" y="977.40" width="16.40" height="2.00" fill="#000"/><rect x="832.65" y="977.40" width="16.40" height="2.00" fill="#000"/><rect x="860.95" y="977.40" width="16.40" height="2.00" fill="#000"/><rect x="889.25" y="977.40" width="16.40" height="2.00" fill="#000"/><rect x="917.55" y="977.40" width="16.40" height="2.00" fill="#000"/><rect x="804.35" y="998.00" width="16.40" height="2.00" fill="#000"/><rect x="832.65" y="998.00" width="16.40" height="2.00" fill="#000"/><rect x="860.95" y="998.00" width="16.40" height="2.00" fill="#000"/><rect x="889.25" y="998.00" width="16.40" height="2.00" fill="#000"/><rect x="917.55" y="998.00" width="16.40" height="2.00" fill="#000"/><rect x="959.20" y="267.92" width="141.50" height="20.32" fill="#fff2cc"/><rect x="959.20" y="308.56" width="141.50" height="20.32" fill="#fff2cc"/><rect x="959.20" y="246.60" width="141.50" height="2.00" fill="#ffc000"/><rect x="959.20" y="266.92" width="141.50" height="2.00" fill="#ffc000"/><rect x="959.20" y="348.20" width="141.50" height="2.00" fill="#ffc000"/><rect x="965.15" y="256.76" width="16.40" height="2.00" fill="#bf8f00"/><rect x="993.45" y="256.76" width="16.40" height="2.00" fill="#bf8f00"/><rect x="1021.75" y="256.76" width="16.40" height="2.00" fill="#bf8f00"/><rect x="1050.05" y="256.76" width="16.40" height="2.00" fill="#bf8f00"/><rect x="1078.35" y="256.76" width="16.40" height="2.00" fill="#bf8f00"/><rect x="965.15" y="277.08" width="16.40" height="2.00" fill="#bf8f00"/><rect x="993.45" y="277.08" width="16.40" height="2.00" fill="#bf8f00"/><rect x="1021.75" y="277.08" width="16.40" height="2.00" fill="#bf8f00"/><rect x="1050.05" y="277.08" width="16.40" height="2.00" fill="#bf8f00"/><rect x="1078.35" y="277.08" width="16.40" height="2.00" fill="#bf8f00"/><rect x="965.15" y="297.40" width="16.40" height="2.00" fill="#bf8f00"/><rect x="993.45" y="297.40" width="16.40" height="2.00" fill="#bf8f00"/><rect x="1021.75" y="297.40" width="16.40" height="2.00" fill="#bf8f00"/><rect x="1050.05" y="297.40" width="16.40" height="2.00" fill="#bf8f00"/><rect x="1078.35" y="297.40" width="16.40" height="2.00" fill="#bf8f00"/><rect x="965.15" y="317.72" width="16.40" height="2.00" fill="#bf8f00"/><rect x="993.45" y="317.72" width="16.40" height="2.00" fill="#bf8f00"/><rect x="1021.75" y="317.72" width="16.40" height="2.00" fill="#bf8f00"/><rect x="1050.05" y="317.72" width="16.40" height="2.00" fill="#bf8f00"/><rect x="1078.35" y="317.72" width="16.40" height="2.00" fill="#bf8f00"/><rect x="965.15" y="338.04" width="16.40" height="2.00" fill="#bf8f00"/><rect x="993.45" y="338.04" width="16.40" height="2.00" fill="#bf8f00"/><rect x="1021.75" y="338.04" width="16.40" height="2.00" fill="#bf8f00"/><rect x="1050.05" y="338.04" width="16.40" height="2.00" fill="#bf8f00"/><rect x="1078.35" y="338.04" width="16.40" height="2.00" fill="#bf8f00"/><rect x="959.20" y="369.00" width="141.50" height="20.48" fill="#ffc000"/><rect x="959.20" y="388.73" width="141.50" height="1.50" fill="#ffc000"/><rect x="959.20" y="409.21" width="141.50" height="1.50" fill="#ffc000"/><rect x="959.20" y="429.69" width="141.50" height="1.50" fill="#ffc000"/><rect x="959.20" y="450.17" width="141.50" height="1.50" fill="#ffc000"/><rect x="959.95" y="369.75" width="140.00" height="100.90" fill="none" stroke="#ffc000" stroke-width="1.5"/><rect x="965.15" y="378.24" width="16.40" height="2.00" fill="#ffffff"/><rect x="993.45" y="378.24" width="16.40" height="2.00" fill="#ffffff"/><rect x="1021.75" y="378.24" width="16.40" height="2.00" fill="#ffffff"/><rect x="1050.05" y="378.24" width="16.40" height="2.00" fill="#ffffff"/><rect x="1078.35" y="378.24" width="16.40" height="2.00" fill="#ffffff"/><rect x="965.15" y="398.72" width="16.40" height="2.00" fill="#000"/><rect x="993.45" y="398.72" width="16.40" height="2.00" fill="#000"/><rect x="1021.75" y="398.72" width="16.40" height="2.00" fill="#000"/><rect x="1050.05" y="398.72" width="16.40" height="2.00" fill="#000"/><rect x="1078.35" y="398.72" width="16.40" height="2.00" fill="#000"/><rect x="965.15" y="419.20" width="16.40" height="2.00" fill="#000"/><rect x="993.45" y="419.20" width="16.40" height="2.00" fill="#000"/><rect x="1021.75" y="419.20" width="16.40" height="2.00" fill="#000"/><rect x="1050.05" y="419.20" width="16.40" height="2.00" fill="#000"/><rect x="1078.35" y="419.20" width="16.40" height="2.00" fill="#000"/><rect x="965.15" y="439.68" width="16.40" height="2.00" fill="#000"/><rect x="993.45" y="439.68" width="16.40" height="2.00" fill="#000"/><rect x="1021.75" y="439.68" width="16.40" height="2.00" fill="#000"/><rect x="1050.05" y="439.68" width="16.40" height="2.00" fill="#000"/><rect x="1078.35" y="439.68" width="16.40" height="2.00" fill="#000"/><rect x="965.15" y="460.16" width="16.40" height="2.00" fill="#000"/><rect x="993.45" y="460.16" width="16.40" height="2.00" fill="#000"/><rect x="1021.75" y="460.16" width="16.40" height="2.00" fill="#000"/><rect x="1050.05" y="460.16" width="16.40" height="2.00" fill="#000"/><rect x="1078.35" y="460.16" width="16.40" height="2.00" fill="#000"/><rect x="959.20" y="511.40" width="141.50" height="20.40" fill="#fff2cc"/><rect x="959.20" y="552.20" width="141.50" height="20.40" fill="#fff2cc"/><rect x="959.20" y="510.65" width="141.50" height="1.50" fill="#ffc000"/><rect x="959.20" y="531.05" width="141.50" height="1.50" fill="#ffc000"/><rect x="959.20" y="551.45" width="141.50" height="1.50" fill="#ffc000"/><rect x="959.20" y="571.85" width="141.50" height="1.50" fill="#ffc000"/><rect x="986.75" y="491.00" width="1.50" height="102.00" fill="#ffc000"/><rect x="1015.05" y="491.00" width="1.50" height="102.00" fill="#ffc000"/><rect x="1043.35" y="491.00" width="1.50" height="102.00" fill="#ffc000"/><rect x="1071.65" y="491.00" width="1.50" height="102.00" fill="#ffc000"/><rect x="959.95" y="491.75" width="140.00" height="100.50" fill="none" stroke="#ffc000" stroke-width="1.5"/><rect x="965.15" y="500.20" width="16.40" height="2.00" fill="#000"/><rect x="993.45" y="500.20" width="16.40" height="2.00" fill="#000"/><rect x="1021.75" y="500.20" width="16.40" height="2.00" fill="#000"/><rect x="1050.05" y="500.20" width="16.40" height="2.00" fill="#000"/><rect x="1078.35" y="500.20" width="16.40" height="2.00" fill="#000"/><rect x="965.15" y="520.60" width="16.40" height="2.00" fill="#000"/><rect x="993.45" y="520.60" width="16.40" height="2.00" fill="#000"/><rect x="1021.75" y="520.60" width="16.40" height="2.00" fill="#000"/><rect x="1050.05" y="520.60" width="16.40" height="2.00" fill="#000"/><rect x="1078.35" y="520.60" width="16.40" height="2.00" fill="#000"/><rect x="965.15" y="541.00" width="16.40" height="2.00" fill="#000"/><rect x="993.45" y="541.00" width="16.40" height="2.00" fill="#000"/><rect x="1021.75" y="541.00" width="16.40" height="2.00" fill="#000"/><rect x="1050.05" y="541.00" width="16.40" height="2.00" fill="#000"/><rect x="1078.35" y="541.00" width="16.40" height="2.00" fill="#000"/><rect x="965.15" y="561.40" width="16.40" height="2.00" fill="#000"/><rect x="993.45" y="561.40" width="16.40" height="2.00" fill="#000"/><rect x="1021.75" y="561.40" width="16.40" height="2.00" fill="#000"/><rect x="1050.05" y="561.40" width="16.40" height="2.00" fill="#000"/><rect x="1078.35" y="561.40" width="16.40" height="2.00" fill="#000"/><rect x="965.15" y="581.80" width="16.40" height="2.00" fill="#000"/><rect x="993.45" y="581.80" width="16.40" height="2.00" fill="#000"/><rect x="1021.75" y="581.80" width="16.40" height="2.00" fill="#000"/><rect x="1050.05" y="581.80" width="16.40" height="2.00" fill="#000"/><rect x="1078.35" y="581.80" width="16.40" height="2.00" fill="#000"/><rect x="959.20" y="663.00" width="141.50" height="20.48" fill="#ffc000"/><rect x="959.20" y="683.48" width="141.50" height="20.48" fill="#fff2cc"/><rect x="959.20" y="724.44" width="141.50" height="20.48" fill="#fff2cc"/><rect x="959.20" y="703.21" width="141.50" height="1.50" fill="#ffd966"/><rect x="959.20" y="723.69" width="141.50" height="1.50" fill="#ffd966"/><rect x="959.20" y="744.17" width="141.50" height="1.50" fill="#ffd966"/><rect x="959.95" y="663.75" width="140.00" height="100.90" fill="none" stroke="#ffd966" stroke-width="1.5"/><rect x="959.20" y="663.00" width="141.50" height="20.48" fill="#ffc000"/><rect x="965.15" y="672.24" width="16.40" height="2.00" fill="#ffffff"/><rect x="993.45" y="672.24" width="16.40" height="2.00" fill="#ffffff"/><rect x="1021.75" y="672.24" width="16.40" height="2.00" fill="#ffffff"/><rect x="1050.05" y="672.24" width="16.40" height="2.00" fill="#ffffff"/><rect x="1078.35" y="672.24" width="16.40" height="2.00" fill="#ffffff"/><rect x="965.15" y="692.72" width="16.40" height="2.00" fill="#000"/><rect x="993.45" y="692.72" width="16.40" height="2.00" fill="#000"/><rect x="1021.75" y="692.72" width="16.40" height="2.00" fill="#000"/><rect x="1050.05" y="692.72" width="16.40" height="2.00" fill="#000"/><rect x="1078.35" y="692.72" width="16.40" height="2.00" fill="#000"/><rect x="965.15" y="713.20" width="16.40" height="2.00" fill="#000"/><rect x="993.45" y="713.20" width="16.40" height="2.00" fill="#000"/><rect x="1021.75" y="713.20" width="16.40" height="2.00" fill="#000"/><rect x="1050.05" y="713.20" width="16.40" height="2.00" fill="#000"/><rect x="1078.35" y="713.20" width="16.40" height="2.00" fill="#000"/><rect x="965.15" y="733.68" width="16.40" height="2.00" fill="#000"/><rect x="993.45" y="733.68" width="16.40" height="2.00" fill="#000"/><rect x="1021.75" y="733.68" width="16.40" height="2.00" fill="#000"/><rect x="1050.05" y="733.68" width="16.40" height="2.00" fill="#000"/><rect x="1078.35" y="733.68" width="16.40" height="2.00" fill="#000"/><rect x="965.15" y="754.16" width="16.40" height="2.00" fill="#000"/><rect x="993.45" y="754.16" width="16.40" height="2.00" fill="#000"/><rect x="1021.75" y="754.16" width="16.40" height="2.00" fill="#000"/><rect x="1050.05" y="754.16" width="16.40" height="2.00" fill="#000"/><rect x="1078.35" y="754.16" width="16.40" height="2.00" fill="#000"/><rect x="959.20" y="784.50" width="141.50" height="20.60" fill="#ffc000"/><rect x="959.20" y="805.10" width="141.50" height="20.60" fill="#ffe699"/><rect x="959.20" y="825.70" width="141.50" height="20.60" fill="#fff2cc"/><rect x="959.20" y="846.30" width="141.50" height="20.60" fill="#ffe699"/><rect x="959.20" y="866.90" width="141.50" height="20.60" fill="#fff2cc"/><rect x="959.20" y="804.10" width="141.50" height="2.00" fill="#ffffff"/><rect x="959.20" y="824.70" width="141.50" height="2.00" fill="#ffffff"/><rect x="959.20" y="845.30" width="141.50" height="2.00" fill="#ffffff"/><rect x="959.20" y="865.90" width="141.50" height="2.00" fill="#ffffff"/><rect x="986.50" y="784.50" width="2.00" height="103.00" fill="#ffffff"/><rect x="1014.80" y="784.50" width="2.00" height="103.00" fill="#ffffff"/><rect x="1043.10" y="784.50" width="2.00" height="103.00" fill="#ffffff"/><rect x="1071.40" y="784.50" width="2.00" height="103.00" fill="#ffffff"/><rect x="965.15" y="793.80" width="16.40" height="2.00" fill="#ffffff"/><rect x="993.45" y="793.80" width="16.40" height="2.00" fill="#ffffff"/><rect x="1021.75" y="793.80" width="16.40" height="2.00" fill="#ffffff"/><rect x="1050.05" y="793.80" width="16.40" height="2.00" fill="#ffffff"/><rect x="1078.35" y="793.80" width="16.40" height="2.00" fill="#ffffff"/><rect x="965.15" y="814.40" width="16.40" height="2.00" fill="#000"/><rect x="993.45" y="814.40" width="16.40" height="2.00" fill="#000"/><rect x="1021.75" y="814.40" width="16.40" height="2.00" fill="#000"/><rect x="1050.05" y="814.40" width="16.40" height="2.00" fill="#000"/><rect x="1078.35" y="814.40" width="16.40" height="2.00" fill="#000"/><rect x="965.15" y="835.00" width="16.40" height="2.00" fill="#000"/><rect x="993.45" y="835.00" width="16.40" height="2.00" fill="#000"/><rect x="1021.75" y="835.00" width="16.40" height="2.00" fill="#000"/><rect x="1050.05" y="835.00" width="16.40" height="2.00" fill="#000"/><rect x="1078.35" y="835.00" width="16.40" height="2.00" fill="#000"/><rect x="965.15" y="855.60" width="16.40" height="2.00" fill="#000"/><rect x="993.45" y="855.60" width="16.40" height="2.00" fill="#000"/><rect x="1021.75" y="855.60" width="16.40" height="2.00" fill="#000"/><rect x="1050.05" y="855.60" width="16.40" height="2.00" fill="#000"/><rect x="1078.35" y="855.60" width="16.40" height="2.00" fill="#000"/><rect x="965.15" y="876.20" width="16.40" height="2.00" fill="#000"/><rect x="993.45" y="876.20" width="16.40" height="2.00" fill="#000"/><rect x="1021.75" y="876.20" width="16.40" height="2.00" fill="#000"/><rect x="1050.05" y="876.20" width="16.40" height="2.00" fill="#000"/><rect x="1078.35" y="876.20" width="16.40" height="2.00" fill="#000"/><rect x="959.20" y="906.30" width="141.50" height="21.60" fill="#ffc000"/><rect x="959.20" y="926.90" width="141.50" height="20.60" fill="#d9d9d9"/><rect x="959.20" y="968.10" width="141.50" height="20.60" fill="#d9d9d9"/><rect x="959.20" y="905.30" width="141.50" height="2.20" fill="#000"/><rect x="959.20" y="925.90" width="141.50" height="2.20" fill="#000"/><rect x="965.15" y="915.60" width="16.40" height="2.00" fill="#ffffff"/><rect x="993.45" y="915.60" width="16.40" height="2.00" fill="#ffffff"/><rect x="1021.75" y="915.60" width="16.40" height="2.00" fill="#ffffff"/><rect x="1050.05" y="915.60" width="16.40" height="2.00" fill="#ffffff"/><rect x="1078.35" y="915.60" width="16.40" height="2.00" fill="#ffffff"/><rect x="965.15" y="936.20" width="16.40" height="2.00" fill="#000"/><rect x="993.45" y="936.20" width="16.40" height="2.00" fill="#000"/><rect x="1021.75" y="936.20" width="16.40" height="2.00" fill="#000"/><rect x="1050.05" y="936.20" width="16.40" height="2.00" fill="#000"/><rect x="1078.35" y="936.20" width="16.40" height="2.00" fill="#000"/><rect x="965.15" y="956.80" width="16.40" height="2.00" fill="#000"/><rect x="993.45" y="956.80" width="16.40" height="2.00" fill="#000"/><rect x="1021.75" y="956.80" width="16.40" height="2.00" fill="#000"/><rect x="1050.05" y="956.80" width="16.40" height="2.00" fill="#000"/><rect x="1078.35" y="956.80" width="16.40" height="2.00" fill="#000"/><rect x="965.15" y="977.40" width="16.40" height="2.00" fill="#000"/><rect x="993.45" y="977.40" width="16.40" height="2.00" fill="#000"/><rect x="1021.75" y="977.40" width="16.40" height="2.00" fill="#000"/><rect x="1050.05" y="977.40" width="16.40" height="2.00" fill="#000"/><rect x="1078.35" y="977.40" width="16.40" height="2.00" fill="#000"/><rect x="965.15" y="998.00" width="16.40" height="2.00" fill="#000"/><rect x="993.45" y="998.00" width="16.40" height="2.00" fill="#000"/><rect x="1021.75" y="998.00" width="16.40" height="2.00" fill="#000"/><rect x="1050.05" y="998.00" width="16.40" height="2.00" fill="#000"/><rect x="1078.35" y="998.00" width="16.40" height="2.00" fill="#000"/><rect x="1120.00" y="267.92" width="141.50" height="20.32" fill="#d9e1f2"/><rect x="1120.00" y="308.56" width="141.50" height="20.32" fill="#d9e1f2"/><rect x="1120.00" y="246.60" width="141.50" height="2.00" fill="#4472c4"/><rect x="1120.00" y="266.92" width="141.50" height="2.00" fill="#4472c4"/><rect x="1120.00" y="348.20" width="141.50" height="2.00" fill="#4472c4"/><rect x="1125.95" y="256.76" width="16.40" height="2.00" fill="#305496"/><rect x="1154.25" y="256.76" width="16.40" height="2.00" fill="#305496"/><rect x="1182.55" y="256.76" width="16.40" height="2.00" fill="#305496"/><rect x="1210.85" y="256.76" width="16.40" height="2.00" fill="#305496"/><rect x="1239.15" y="256.76" width="16.40" height="2.00" fill="#305496"/><rect x="1125.95" y="277.08" width="16.40" height="2.00" fill="#305496"/><rect x="1154.25" y="277.08" width="16.40" height="2.00" fill="#305496"/><rect x="1182.55" y="277.08" width="16.40" height="2.00" fill="#305496"/><rect x="1210.85" y="277.08" width="16.40" height="2.00" fill="#305496"/><rect x="1239.15" y="277.08" width="16.40" height="2.00" fill="#305496"/><rect x="1125.95" y="297.40" width="16.40" height="2.00" fill="#305496"/><rect x="1154.25" y="297.40" width="16.40" height="2.00" fill="#305496"/><rect x="1182.55" y="297.40" width="16.40" height="2.00" fill="#305496"/><rect x="1210.85" y="297.40" width="16.40" height="2.00" fill="#305496"/><rect x="1239.15" y="297.40" width="16.40" height="2.00" fill="#305496"/><rect x="1125.95" y="317.72" width="16.40" height="2.00" fill="#305496"/><rect x="1154.25" y="317.72" width="16.40" height="2.00" fill="#305496"/><rect x="1182.55" y="317.72" width="16.40" height="2.00" fill="#305496"/><rect x="1210.85" y="317.72" width="16.40" height="2.00" fill="#305496"/><rect x="1239.15" y="317.72" width="16.40" height="2.00" fill="#305496"/><rect x="1125.95" y="338.04" width="16.40" height="2.00" fill="#305496"/><rect x="1154.25" y="338.04" width="16.40" height="2.00" fill="#305496"/><rect x="1182.55" y="338.04" width="16.40" height="2.00" fill="#305496"/><rect x="1210.85" y="338.04" width="16.40" height="2.00" fill="#305496"/><rect x="1239.15" y="338.04" width="16.40" height="2.00" fill="#305496"/><rect x="1120.00" y="369.00" width="141.50" height="20.48" fill="#4472c4"/><rect x="1120.00" y="388.73" width="141.50" height="1.50" fill="#4472c4"/><rect x="1120.00" y="409.21" width="141.50" height="1.50" fill="#4472c4"/><rect x="1120.00" y="429.69" width="141.50" height="1.50" fill="#4472c4"/><rect x="1120.00" y="450.17" width="141.50" height="1.50" fill="#4472c4"/><rect x="1120.75" y="369.75" width="140.00" height="100.90" fill="none" stroke="#4472c4" stroke-width="1.5"/><rect x="1125.95" y="378.24" width="16.40" height="2.00" fill="#ffffff"/><rect x="1154.25" y="378.24" width="16.40" height="2.00" fill="#ffffff"/><rect x="1182.55" y="378.24" width="16.40" height="2.00" fill="#ffffff"/><rect x="1210.85" y="378.24" width="16.40" height="2.00" fill="#ffffff"/><rect x="1239.15" y="378.24" width="16.40" height="2.00" fill="#ffffff"/><rect x="1125.95" y="398.72" width="16.40" height="2.00" fill="#000"/><rect x="1154.25" y="398.72" width="16.40" height="2.00" fill="#000"/><rect x="1182.55" y="398.72" width="16.40" height="2.00" fill="#000"/><rect x="1210.85" y="398.72" width="16.40" height="2.00" fill="#000"/><rect x="1239.15" y="398.72" width="16.40" height="2.00" fill="#000"/><rect x="1125.95" y="419.20" width="16.40" height="2.00" fill="#000"/><rect x="1154.25" y="419.20" width="16.40" height="2.00" fill="#000"/><rect x="1182.55" y="419.20" width="16.40" height="2.00" fill="#000"/><rect x="1210.85" y="419.20" width="16.40" height="2.00" fill="#000"/><rect x="1239.15" y="419.20" width="16.40" height="2.00" fill="#000"/><rect x="1125.95" y="439.68" width="16.40" height="2.00" fill="#000"/><rect x="1154.25" y="439.68" width="16.40" height="2.00" fill="#000"/><rect x="1182.55" y="439.68" width="16.40" height="2.00" fill="#000"/><rect x="1210.85" y="439.68" width="16.40" height="2.00" fill="#000"/><rect x="1239.15" y="439.68" width="16.40" height="2.00" fill="#000"/><rect x="1125.95" y="460.16" width="16.40" height="2.00" fill="#000"/><rect x="1154.25" y="460.16" width="16.40" height="2.00" fill="#000"/><rect x="1182.55" y="460.16" width="16.40" height="2.00" fill="#000"/><rect x="1210.85" y="460.16" width="16.40" height="2.00" fill="#000"/><rect x="1239.15" y="460.16" width="16.40" height="2.00" fill="#000"/><rect x="1120.00" y="511.40" width="141.50" height="20.40" fill="#d9e1f2"/><rect x="1120.00" y="552.20" width="141.50" height="20.40" fill="#d9e1f2"/><rect x="1120.00" y="510.65" width="141.50" height="1.50" fill="#4472c4"/><rect x="1120.00" y="531.05" width="141.50" height="1.50" fill="#4472c4"/><rect x="1120.00" y="551.45" width="141.50" height="1.50" fill="#4472c4"/><rect x="1120.00" y="571.85" width="141.50" height="1.50" fill="#4472c4"/><rect x="1147.55" y="491.00" width="1.50" height="102.00" fill="#4472c4"/><rect x="1175.85" y="491.00" width="1.50" height="102.00" fill="#4472c4"/><rect x="1204.15" y="491.00" width="1.50" height="102.00" fill="#4472c4"/><rect x="1232.45" y="491.00" width="1.50" height="102.00" fill="#4472c4"/><rect x="1120.75" y="491.75" width="140.00" height="100.50" fill="none" stroke="#4472c4" stroke-width="1.5"/><rect x="1125.95" y="500.20" width="16.40" height="2.00" fill="#000"/><rect x="1154.25" y="500.20" width="16.40" height="2.00" fill="#000"/><rect x="1182.55" y="500.20" width="16.40" height="2.00" fill="#000"/><rect x="1210.85" y="500.20" width="16.40" height="2.00" fill="#000"/><rect x="1239.15" y="500.20" width="16.40" height="2.00" fill="#000"/><rect x="1125.95" y="520.60" width="16.40" height="2.00" fill="#000"/><rect x="1154.25" y="520.60" width="16.40" height="2.00" fill="#000"/><rect x="1182.55" y="520.60" width="16.40" height="2.00" fill="#000"/><rect x="1210.85" y="520.60" width="16.40" height="2.00" fill="#000"/><rect x="1239.15" y="520.60" width="16.40" height="2.00" fill="#000"/><rect x="1125.95" y="541.00" width="16.40" height="2.00" fill="#000"/><rect x="1154.25" y="541.00" width="16.40" height="2.00" fill="#000"/><rect x="1182.55" y="541.00" width="16.40" height="2.00" fill="#000"/><rect x="1210.85" y="541.00" width="16.40" height="2.00" fill="#000"/><rect x="1239.15" y="541.00" width="16.40" height="2.00" fill="#000"/><rect x="1125.95" y="561.40" width="16.40" height="2.00" fill="#000"/><rect x="1154.25" y="561.40" width="16.40" height="2.00" fill="#000"/><rect x="1182.55" y="561.40" width="16.40" height="2.00" fill="#000"/><rect x="1210.85" y="561.40" width="16.40" height="2.00" fill="#000"/><rect x="1239.15" y="561.40" width="16.40" height="2.00" fill="#000"/><rect x="1125.95" y="581.80" width="16.40" height="2.00" fill="#000"/><rect x="1154.25" y="581.80" width="16.40" height="2.00" fill="#000"/><rect x="1182.55" y="581.80" width="16.40" height="2.00" fill="#000"/><rect x="1210.85" y="581.80" width="16.40" height="2.00" fill="#000"/><rect x="1239.15" y="581.80" width="16.40" height="2.00" fill="#000"/><rect x="1120.00" y="663.00" width="141.50" height="20.48" fill="#4472c4"/><rect x="1120.00" y="683.48" width="141.50" height="20.48" fill="#d9e1f2"/><rect x="1120.00" y="724.44" width="141.50" height="20.48" fill="#d9e1f2"/><rect x="1120.00" y="703.21" width="141.50" height="1.50" fill="#8ea9db"/><rect x="1120.00" y="723.69" width="141.50" height="1.50" fill="#8ea9db"/><rect x="1120.00" y="744.17" width="141.50" height="1.50" fill="#8ea9db"/><rect x="1120.75" y="663.75" width="140.00" height="100.90" fill="none" stroke="#8ea9db" stroke-width="1.5"/><rect x="1120.00" y="663.00" width="141.50" height="20.48" fill="#4472c4"/><rect x="1125.95" y="672.24" width="16.40" height="2.00" fill="#ffffff"/><rect x="1154.25" y="672.24" width="16.40" height="2.00" fill="#ffffff"/><rect x="1182.55" y="672.24" width="16.40" height="2.00" fill="#ffffff"/><rect x="1210.85" y="672.24" width="16.40" height="2.00" fill="#ffffff"/><rect x="1239.15" y="672.24" width="16.40" height="2.00" fill="#ffffff"/><rect x="1125.95" y="692.72" width="16.40" height="2.00" fill="#000"/><rect x="1154.25" y="692.72" width="16.40" height="2.00" fill="#000"/><rect x="1182.55" y="692.72" width="16.40" height="2.00" fill="#000"/><rect x="1210.85" y="692.72" width="16.40" height="2.00" fill="#000"/><rect x="1239.15" y="692.72" width="16.40" height="2.00" fill="#000"/><rect x="1125.95" y="713.20" width="16.40" height="2.00" fill="#000"/><rect x="1154.25" y="713.20" width="16.40" height="2.00" fill="#000"/><rect x="1182.55" y="713.20" width="16.40" height="2.00" fill="#000"/><rect x="1210.85" y="713.20" width="16.40" height="2.00" fill="#000"/><rect x="1239.15" y="713.20" width="16.40" height="2.00" fill="#000"/><rect x="1125.95" y="733.68" width="16.40" height="2.00" fill="#000"/><rect x="1154.25" y="733.68" width="16.40" height="2.00" fill="#000"/><rect x="1182.55" y="733.68" width="16.40" height="2.00" fill="#000"/><rect x="1210.85" y="733.68" width="16.40" height="2.00" fill="#000"/><rect x="1239.15" y="733.68" width="16.40" height="2.00" fill="#000"/><rect x="1125.95" y="754.16" width="16.40" height="2.00" fill="#000"/><rect x="1154.25" y="754.16" width="16.40" height="2.00" fill="#000"/><rect x="1182.55" y="754.16" width="16.40" height="2.00" fill="#000"/><rect x="1210.85" y="754.16" width="16.40" height="2.00" fill="#000"/><rect x="1239.15" y="754.16" width="16.40" height="2.00" fill="#000"/><rect x="1120.00" y="784.50" width="141.50" height="20.60" fill="#4472c4"/><rect x="1120.00" y="805.10" width="141.50" height="20.60" fill="#b4c6e7"/><rect x="1120.00" y="825.70" width="141.50" height="20.60" fill="#d9e1f2"/><rect x="1120.00" y="846.30" width="141.50" height="20.60" fill="#b4c6e7"/><rect x="1120.00" y="866.90" width="141.50" height="20.60" fill="#d9e1f2"/><rect x="1120.00" y="804.10" width="141.50" height="2.00" fill="#ffffff"/><rect x="1120.00" y="824.70" width="141.50" height="2.00" fill="#ffffff"/><rect x="1120.00" y="845.30" width="141.50" height="2.00" fill="#ffffff"/><rect x="1120.00" y="865.90" width="141.50" height="2.00" fill="#ffffff"/><rect x="1147.30" y="784.50" width="2.00" height="103.00" fill="#ffffff"/><rect x="1175.60" y="784.50" width="2.00" height="103.00" fill="#ffffff"/><rect x="1203.90" y="784.50" width="2.00" height="103.00" fill="#ffffff"/><rect x="1232.20" y="784.50" width="2.00" height="103.00" fill="#ffffff"/><rect x="1125.95" y="793.80" width="16.40" height="2.00" fill="#ffffff"/><rect x="1154.25" y="793.80" width="16.40" height="2.00" fill="#ffffff"/><rect x="1182.55" y="793.80" width="16.40" height="2.00" fill="#ffffff"/><rect x="1210.85" y="793.80" width="16.40" height="2.00" fill="#ffffff"/><rect x="1239.15" y="793.80" width="16.40" height="2.00" fill="#ffffff"/><rect x="1125.95" y="814.40" width="16.40" height="2.00" fill="#000"/><rect x="1154.25" y="814.40" width="16.40" height="2.00" fill="#000"/><rect x="1182.55" y="814.40" width="16.40" height="2.00" fill="#000"/><rect x="1210.85" y="814.40" width="16.40" height="2.00" fill="#000"/><rect x="1239.15" y="814.40" width="16.40" height="2.00" fill="#000"/><rect x="1125.95" y="835.00" width="16.40" height="2.00" fill="#000"/><rect x="1154.25" y="835.00" width="16.40" height="2.00" fill="#000"/><rect x="1182.55" y="835.00" width="16.40" height="2.00" fill="#000"/><rect x="1210.85" y="835.00" width="16.40" height="2.00" fill="#000"/><rect x="1239.15" y="835.00" width="16.40" height="2.00" fill="#000"/><rect x="1125.95" y="855.60" width="16.40" height="2.00" fill="#000"/><rect x="1154.25" y="855.60" width="16.40" height="2.00" fill="#000"/><rect x="1182.55" y="855.60" width="16.40" height="2.00" fill="#000"/><rect x="1210.85" y="855.60" width="16.40" height="2.00" fill="#000"/><rect x="1239.15" y="855.60" width="16.40" height="2.00" fill="#000"/><rect x="1125.95" y="876.20" width="16.40" height="2.00" fill="#000"/><rect x="1154.25" y="876.20" width="16.40" height="2.00" fill="#000"/><rect x="1182.55" y="876.20" width="16.40" height="2.00" fill="#000"/><rect x="1210.85" y="876.20" width="16.40" height="2.00" fill="#000"/><rect x="1239.15" y="876.20" width="16.40" height="2.00" fill="#000"/><rect x="1120.00" y="906.30" width="141.50" height="21.60" fill="#4472c4"/><rect x="1120.00" y="926.90" width="141.50" height="20.60" fill="#d9d9d9"/><rect x="1120.00" y="968.10" width="141.50" height="20.60" fill="#d9d9d9"/><rect x="1120.00" y="905.30" width="141.50" height="2.20" fill="#000"/><rect x="1120.00" y="925.90" width="141.50" height="2.20" fill="#000"/><rect x="1125.95" y="915.60" width="16.40" height="2.00" fill="#ffffff"/><rect x="1154.25" y="915.60" width="16.40" height="2.00" fill="#ffffff"/><rect x="1182.55" y="915.60" width="16.40" height="2.00" fill="#ffffff"/><rect x="1210.85" y="915.60" width="16.40" height="2.00" fill="#ffffff"/><rect x="1239.15" y="915.60" width="16.40" height="2.00" fill="#ffffff"/><rect x="1125.95" y="936.20" width="16.40" height="2.00" fill="#000"/><rect x="1154.25" y="936.20" width="16.40" height="2.00" fill="#000"/><rect x="1182.55" y="936.20" width="16.40" height="2.00" fill="#000"/><rect x="1210.85" y="936.20" width="16.40" height="2.00" fill="#000"/><rect x="1239.15" y="936.20" width="16.40" height="2.00" fill="#000"/><rect x="1125.95" y="956.80" width="16.40" height="2.00" fill="#000"/><rect x="1154.25" y="956.80" width="16.40" height="2.00" fill="#000"/><rect x="1182.55" y="956.80" width="16.40" height="2.00" fill="#000"/><rect x="1210.85" y="956.80" width="16.40" height="2.00" fill="#000"/><rect x="1239.15" y="956.80" width="16.40" height="2.00" fill="#000"/><rect x="1125.95" y="977.40" width="16.40" height="2.00" fill="#000"/><rect x="1154.25" y="977.40" width="16.40" height="2.00" fill="#000"/><rect x="1182.55" y="977.40" width="16.40" height="2.00" fill="#000"/><rect x="1210.85" y="977.40" width="16.40" height="2.00" fill="#000"/><rect x="1239.15" y="977.40" width="16.40" height="2.00" fill="#000"/><rect x="1125.95" y="998.00" width="16.40" height="2.00" fill="#000"/><rect x="1154.25" y="998.00" width="16.40" height="2.00" fill="#000"/><rect x="1182.55" y="998.00" width="16.40" height="2.00" fill="#000"/><rect x="1210.85" y="998.00" width="16.40" height="2.00" fill="#000"/><rect x="1239.15" y="998.00" width="16.40" height="2.00" fill="#000"/><rect x="1280.80" y="267.92" width="141.50" height="20.32" fill="#e2efda"/><rect x="1280.80" y="308.56" width="141.50" height="20.32" fill="#e2efda"/><rect x="1280.80" y="246.60" width="141.50" height="2.00" fill="#70ad47"/><rect x="1280.80" y="266.92" width="141.50" height="2.00" fill="#70ad47"/><rect x="1280.80" y="348.20" width="141.50" height="2.00" fill="#70ad47"/><rect x="1286.75" y="256.76" width="16.40" height="2.00" fill="#548235"/><rect x="1315.05" y="256.76" width="16.40" height="2.00" fill="#548235"/><rect x="1343.35" y="256.76" width="16.40" height="2.00" fill="#548235"/><rect x="1371.65" y="256.76" width="16.40" height="2.00" fill="#548235"/><rect x="1399.95" y="256.76" width="16.40" height="2.00" fill="#548235"/><rect x="1286.75" y="277.08" width="16.40" height="2.00" fill="#548235"/><rect x="1315.05" y="277.08" width="16.40" height="2.00" fill="#548235"/><rect x="1343.35" y="277.08" width="16.40" height="2.00" fill="#548235"/><rect x="1371.65" y="277.08" width="16.40" height="2.00" fill="#548235"/><rect x="1399.95" y="277.08" width="16.40" height="2.00" fill="#548235"/><rect x="1286.75" y="297.40" width="16.40" height="2.00" fill="#548235"/><rect x="1315.05" y="297.40" width="16.40" height="2.00" fill="#548235"/><rect x="1343.35" y="297.40" width="16.40" height="2.00" fill="#548235"/><rect x="1371.65" y="297.40" width="16.40" height="2.00" fill="#548235"/><rect x="1399.95" y="297.40" width="16.40" height="2.00" fill="#548235"/><rect x="1286.75" y="317.72" width="16.40" height="2.00" fill="#548235"/><rect x="1315.05" y="317.72" width="16.40" height="2.00" fill="#548235"/><rect x="1343.35" y="317.72" width="16.40" height="2.00" fill="#548235"/><rect x="1371.65" y="317.72" width="16.40" height="2.00" fill="#548235"/><rect x="1399.95" y="317.72" width="16.40" height="2.00" fill="#548235"/><rect x="1286.75" y="338.04" width="16.40" height="2.00" fill="#548235"/><rect x="1315.05" y="338.04" width="16.40" height="2.00" fill="#548235"/><rect x="1343.35" y="338.04" width="16.40" height="2.00" fill="#548235"/><rect x="1371.65" y="338.04" width="16.40" height="2.00" fill="#548235"/><rect x="1399.95" y="338.04" width="16.40" height="2.00" fill="#548235"/><rect x="1280.80" y="369.00" width="141.50" height="20.48" fill="#70ad47"/><rect x="1280.80" y="388.73" width="141.50" height="1.50" fill="#70ad47"/><rect x="1280.80" y="409.21" width="141.50" height="1.50" fill="#70ad47"/><rect x="1280.80" y="429.69" width="141.50" height="1.50" fill="#70ad47"/><rect x="1280.80" y="450.17" width="141.50" height="1.50" fill="#70ad47"/><rect x="1281.55" y="369.75" width="140.00" height="100.90" fill="none" stroke="#70ad47" stroke-width="1.5"/><rect x="1286.75" y="378.24" width="16.40" height="2.00" fill="#ffffff"/><rect x="1315.05" y="378.24" width="16.40" height="2.00" fill="#ffffff"/><rect x="1343.35" y="378.24" width="16.40" height="2.00" fill="#ffffff"/><rect x="1371.65" y="378.24" width="16.40" height="2.00" fill="#ffffff"/><rect x="1399.95" y="378.24" width="16.40" height="2.00" fill="#ffffff"/><rect x="1286.75" y="398.72" width="16.40" height="2.00" fill="#000"/><rect x="1315.05" y="398.72" width="16.40" height="2.00" fill="#000"/><rect x="1343.35" y="398.72" width="16.40" height="2.00" fill="#000"/><rect x="1371.65" y="398.72" width="16.40" height="2.00" fill="#000"/><rect x="1399.95" y="398.72" width="16.40" height="2.00" fill="#000"/><rect x="1286.75" y="419.20" width="16.40" height="2.00" fill="#000"/><rect x="1315.05" y="419.20" width="16.40" height="2.00" fill="#000"/><rect x="1343.35" y="419.20" width="16.40" height="2.00" fill="#000"/><rect x="1371.65" y="419.20" width="16.40" height="2.00" fill="#000"/><rect x="1399.95" y="419.20" width="16.40" height="2.00" fill="#000"/><rect x="1286.75" y="439.68" width="16.40" height="2.00" fill="#000"/><rect x="1315.05" y="439.68" width="16.40" height="2.00" fill="#000"/><rect x="1343.35" y="439.68" width="16.40" height="2.00" fill="#000"/><rect x="1371.65" y="439.68" width="16.40" height="2.00" fill="#000"/><rect x="1399.95" y="439.68" width="16.40" height="2.00" fill="#000"/><rect x="1286.75" y="460.16" width="16.40" height="2.00" fill="#000"/><rect x="1315.05" y="460.16" width="16.40" height="2.00" fill="#000"/><rect x="1343.35" y="460.16" width="16.40" height="2.00" fill="#000"/><rect x="1371.65" y="460.16" width="16.40" height="2.00" fill="#000"/><rect x="1399.95" y="460.16" width="16.40" height="2.00" fill="#000"/><rect x="1280.80" y="511.40" width="141.50" height="20.40" fill="#e2efda"/><rect x="1280.80" y="552.20" width="141.50" height="20.40" fill="#e2efda"/><rect x="1280.80" y="510.65" width="141.50" height="1.50" fill="#70ad47"/><rect x="1280.80" y="531.05" width="141.50" height="1.50" fill="#70ad47"/><rect x="1280.80" y="551.45" width="141.50" height="1.50" fill="#70ad47"/><rect x="1280.80" y="571.85" width="141.50" height="1.50" fill="#70ad47"/><rect x="1308.35" y="491.00" width="1.50" height="102.00" fill="#70ad47"/><rect x="1336.65" y="491.00" width="1.50" height="102.00" fill="#70ad47"/><rect x="1364.95" y="491.00" width="1.50" height="102.00" fill="#70ad47"/><rect x="1393.25" y="491.00" width="1.50" height="102.00" fill="#70ad47"/><rect x="1281.55" y="491.75" width="140.00" height="100.50" fill="none" stroke="#70ad47" stroke-width="1.5"/><rect x="1286.75" y="500.20" width="16.40" height="2.00" fill="#000"/><rect x="1315.05" y="500.20" width="16.40" height="2.00" fill="#000"/><rect x="1343.35" y="500.20" width="16.40" height="2.00" fill="#000"/><rect x="1371.65" y="500.20" width="16.40" height="2.00" fill="#000"/><rect x="1399.95" y="500.20" width="16.40" height="2.00" fill="#000"/><rect x="1286.75" y="520.60" width="16.40" height="2.00" fill="#000"/><rect x="1315.05" y="520.60" width="16.40" height="2.00" fill="#000"/><rect x="1343.35" y="520.60" width="16.40" height="2.00" fill="#000"/><rect x="1371.65" y="520.60" width="16.40" height="2.00" fill="#000"/><rect x="1399.95" y="520.60" width="16.40" height="2.00" fill="#000"/><rect x="1286.75" y="541.00" width="16.40" height="2.00" fill="#000"/><rect x="1315.05" y="541.00" width="16.40" height="2.00" fill="#000"/><rect x="1343.35" y="541.00" width="16.40" height="2.00" fill="#000"/><rect x="1371.65" y="541.00" width="16.40" height="2.00" fill="#000"/><rect x="1399.95" y="541.00" width="16.40" height="2.00" fill="#000"/><rect x="1286.75" y="561.40" width="16.40" height="2.00" fill="#000"/><rect x="1315.05" y="561.40" width="16.40" height="2.00" fill="#000"/><rect x="1343.35" y="561.40" width="16.40" height="2.00" fill="#000"/><rect x="1371.65" y="561.40" width="16.40" height="2.00" fill="#000"/><rect x="1399.95" y="561.40" width="16.40" height="2.00" fill="#000"/><rect x="1286.75" y="581.80" width="16.40" height="2.00" fill="#000"/><rect x="1315.05" y="581.80" width="16.40" height="2.00" fill="#000"/><rect x="1343.35" y="581.80" width="16.40" height="2.00" fill="#000"/><rect x="1371.65" y="581.80" width="16.40" height="2.00" fill="#000"/><rect x="1399.95" y="581.80" width="16.40" height="2.00" fill="#000"/><rect x="1280.80" y="663.00" width="141.50" height="20.48" fill="#70ad47"/><rect x="1280.80" y="683.48" width="141.50" height="20.48" fill="#e2efda"/><rect x="1280.80" y="724.44" width="141.50" height="20.48" fill="#e2efda"/><rect x="1280.80" y="703.21" width="141.50" height="1.50" fill="#a9d08e"/><rect x="1280.80" y="723.69" width="141.50" height="1.50" fill="#a9d08e"/><rect x="1280.80" y="744.17" width="141.50" height="1.50" fill="#a9d08e"/><rect x="1281.55" y="663.75" width="140.00" height="100.90" fill="none" stroke="#a9d08e" stroke-width="1.5"/><rect x="1280.80" y="663.00" width="141.50" height="20.48" fill="#70ad47"/><rect x="1286.75" y="672.24" width="16.40" height="2.00" fill="#ffffff"/><rect x="1315.05" y="672.24" width="16.40" height="2.00" fill="#ffffff"/><rect x="1343.35" y="672.24" width="16.40" height="2.00" fill="#ffffff"/><rect x="1371.65" y="672.24" width="16.40" height="2.00" fill="#ffffff"/><rect x="1399.95" y="672.24" width="16.40" height="2.00" fill="#ffffff"/><rect x="1286.75" y="692.72" width="16.40" height="2.00" fill="#000"/><rect x="1315.05" y="692.72" width="16.40" height="2.00" fill="#000"/><rect x="1343.35" y="692.72" width="16.40" height="2.00" fill="#000"/><rect x="1371.65" y="692.72" width="16.40" height="2.00" fill="#000"/><rect x="1399.95" y="692.72" width="16.40" height="2.00" fill="#000"/><rect x="1286.75" y="713.20" width="16.40" height="2.00" fill="#000"/><rect x="1315.05" y="713.20" width="16.40" height="2.00" fill="#000"/><rect x="1343.35" y="713.20" width="16.40" height="2.00" fill="#000"/><rect x="1371.65" y="713.20" width="16.40" height="2.00" fill="#000"/><rect x="1399.95" y="713.20" width="16.40" height="2.00" fill="#000"/><rect x="1286.75" y="733.68" width="16.40" height="2.00" fill="#000"/><rect x="1315.05" y="733.68" width="16.40" height="2.00" fill="#000"/><rect x="1343.35" y="733.68" width="16.40" height="2.00" fill="#000"/><rect x="1371.65" y="733.68" width="16.40" height="2.00" fill="#000"/><rect x="1399.95" y="733.68" width="16.40" height="2.00" fill="#000"/><rect x="1286.75" y="754.16" width="16.40" height="2.00" fill="#000"/><rect x="1315.05" y="754.16" width="16.40" height="2.00" fill="#000"/><rect x="1343.35" y="754.16" width="16.40" height="2.00" fill="#000"/><rect x="1371.65" y="754.16" width="16.40" height="2.00" fill="#000"/><rect x="1399.95" y="754.16" width="16.40" height="2.00" fill="#000"/><rect x="1280.80" y="784.50" width="141.50" height="20.60" fill="#70ad47"/><rect x="1280.80" y="805.10" width="141.50" height="20.60" fill="#c6e0b4"/><rect x="1280.80" y="825.70" width="141.50" height="20.60" fill="#e2efda"/><rect x="1280.80" y="846.30" width="141.50" height="20.60" fill="#c6e0b4"/><rect x="1280.80" y="866.90" width="141.50" height="20.60" fill="#e2efda"/><rect x="1280.80" y="804.10" width="141.50" height="2.00" fill="#ffffff"/><rect x="1280.80" y="824.70" width="141.50" height="2.00" fill="#ffffff"/><rect x="1280.80" y="845.30" width="141.50" height="2.00" fill="#ffffff"/><rect x="1280.80" y="865.90" width="141.50" height="2.00" fill="#ffffff"/><rect x="1308.10" y="784.50" width="2.00" height="103.00" fill="#ffffff"/><rect x="1336.40" y="784.50" width="2.00" height="103.00" fill="#ffffff"/><rect x="1364.70" y="784.50" width="2.00" height="103.00" fill="#ffffff"/><rect x="1393.00" y="784.50" width="2.00" height="103.00" fill="#ffffff"/><rect x="1286.75" y="793.80" width="16.40" height="2.00" fill="#ffffff"/><rect x="1315.05" y="793.80" width="16.40" height="2.00" fill="#ffffff"/><rect x="1343.35" y="793.80" width="16.40" height="2.00" fill="#ffffff"/><rect x="1371.65" y="793.80" width="16.40" height="2.00" fill="#ffffff"/><rect x="1399.95" y="793.80" width="16.40" height="2.00" fill="#ffffff"/><rect x="1286.75" y="814.40" width="16.40" height="2.00" fill="#000"/><rect x="1315.05" y="814.40" width="16.40" height="2.00" fill="#000"/><rect x="1343.35" y="814.40" width="16.40" height="2.00" fill="#000"/><rect x="1371.65" y="814.40" width="16.40" height="2.00" fill="#000"/><rect x="1399.95" y="814.40" width="16.40" height="2.00" fill="#000"/><rect x="1286.75" y="835.00" width="16.40" height="2.00" fill="#000"/><rect x="1315.05" y="835.00" width="16.40" height="2.00" fill="#000"/><rect x="1343.35" y="835.00" width="16.40" height="2.00" fill="#000"/><rect x="1371.65" y="835.00" width="16.40" height="2.00" fill="#000"/><rect x="1399.95" y="835.00" width="16.40" height="2.00" fill="#000"/><rect x="1286.75" y="855.60" width="16.40" height="2.00" fill="#000"/><rect x="1315.05" y="855.60" width="16.40" height="2.00" fill="#000"/><rect x="1343.35" y="855.60" width="16.40" height="2.00" fill="#000"/><rect x="1371.65" y="855.60" width="16.40" height="2.00" fill="#000"/><rect x="1399.95" y="855.60" width="16.40" height="2.00" fill="#000"/><rect x="1286.75" y="876.20" width="16.40" height="2.00" fill="#000"/><rect x="1315.05" y="876.20" width="16.40" height="2.00" fill="#000"/><rect x="1343.35" y="876.20" width="16.40" height="2.00" fill="#000"/><rect x="1371.65" y="876.20" width="16.40" height="2.00" fill="#000"/><rect x="1399.95" y="876.20" width="16.40" height="2.00" fill="#000"/><rect x="1280.80" y="906.30" width="141.50" height="21.60" fill="#70ad47"/><rect x="1280.80" y="926.90" width="141.50" height="20.60" fill="#d9d9d9"/><rect x="1280.80" y="968.10" width="141.50" height="20.60" fill="#d9d9d9"/><rect x="1280.80" y="905.30" width="141.50" height="2.20" fill="#000"/><rect x="1280.80" y="925.90" width="141.50" height="2.20" fill="#000"/><rect x="1286.75" y="915.60" width="16.40" height="2.00" fill="#ffffff"/><rect x="1315.05" y="915.60" width="16.40" height="2.00" fill="#ffffff"/><rect x="1343.35" y="915.60" width="16.40" height="2.00" fill="#ffffff"/><rect x="1371.65" y="915.60" width="16.40" height="2.00" fill="#ffffff"/><rect x="1399.95" y="915.60" width="16.40" height="2.00" fill="#ffffff"/><rect x="1286.75" y="936.20" width="16.40" height="2.00" fill="#000"/><rect x="1315.05" y="936.20" width="16.40" height="2.00" fill="#000"/><rect x="1343.35" y="936.20" width="16.40" height="2.00" fill="#000"/><rect x="1371.65" y="936.20" width="16.40" height="2.00" fill="#000"/><rect x="1399.95" y="936.20" width="16.40" height="2.00" fill="#000"/><rect x="1286.75" y="956.80" width="16.40" height="2.00" fill="#000"/><rect x="1315.05" y="956.80" width="16.40" height="2.00" fill="#000"/><rect x="1343.35" y="956.80" width="16.40" height="2.00" fill="#000"/><rect x="1371.65" y="956.80" width="16.40" height="2.00" fill="#000"/><rect x="1399.95" y="956.80" width="16.40" height="2.00" fill="#000"/><rect x="1286.75" y="977.40" width="16.40" height="2.00" fill="#000"/><rect x="1315.05" y="977.40" width="16.40" height="2.00" fill="#000"/><rect x="1343.35" y="977.40" width="16.40" height="2.00" fill="#000"/><rect x="1371.65" y="977.40" width="16.40" height="2.00" fill="#000"/><rect x="1399.95" y="977.40" width="16.40" height="2.00" fill="#000"/><rect x="1286.75" y="998.00" width="16.40" height="2.00" fill="#000"/><rect x="1315.05" y="998.00" width="16.40" height="2.00" fill="#000"/><rect x="1343.35" y="998.00" width="16.40" height="2.00" fill="#000"/><rect x="1371.65" y="998.00" width="16.40" height="2.00" fill="#000"/><rect x="1399.95" y="998.00" width="16.40" height="2.00" fill="#000"/></svg>
<div style="left:714.6px;top:121px;width:311px;height:77.6px;background:transparent;border:4.6px solid #e0000c;border-radius:14px;"></div>
</body></html>
